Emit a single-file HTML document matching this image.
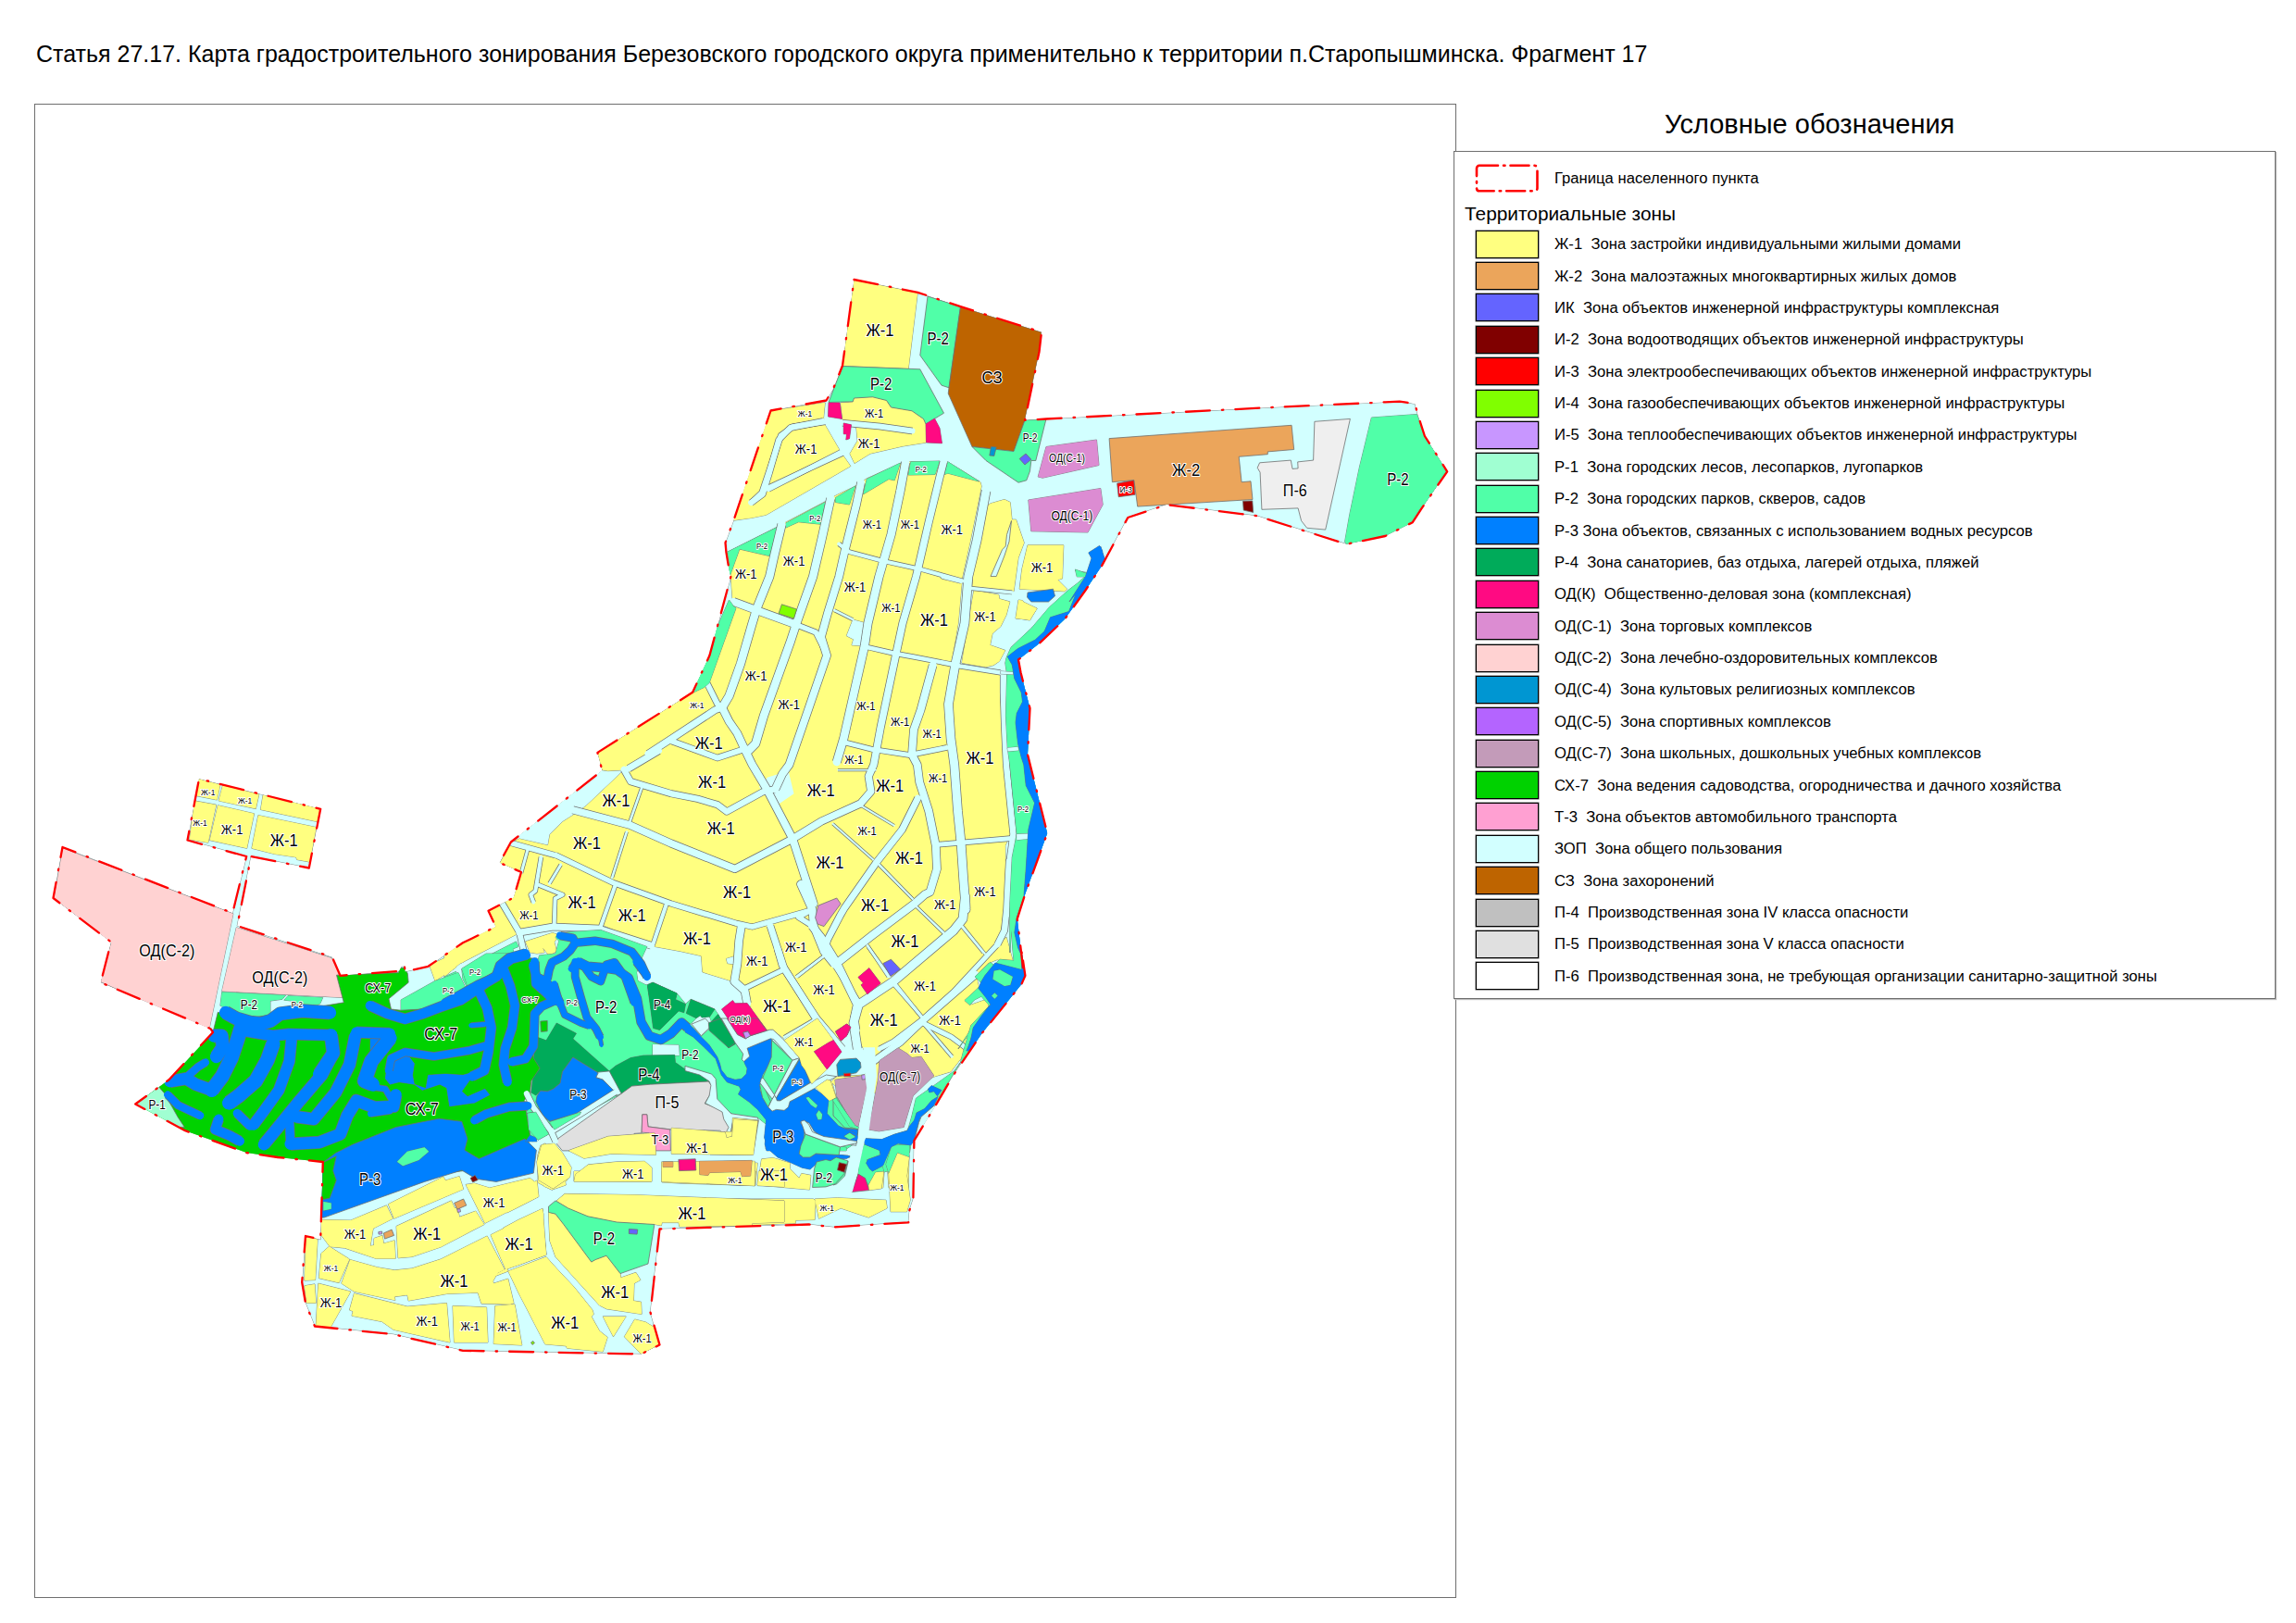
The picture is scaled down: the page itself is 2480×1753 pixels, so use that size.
<!DOCTYPE html>
<html><head><meta charset="utf-8"><title>map</title>
<style>
html,body{margin:0;padding:0;background:#fff;}
body{width:2480px;height:1753px;position:relative;overflow:hidden;font-family:"Liberation Sans",sans-serif;color:#000;}
#title{position:absolute;left:39px;top:44.3px;font-size:25px;white-space:nowrap;line-height:28px;}
#frame{position:absolute;left:37px;top:112px;width:1534px;height:1612px;border:1px solid #6e6e6e;}
#lgbox{position:absolute;left:1570px;top:163px;width:886px;height:914px;border:1px solid #6e6e6e;background:#fff;box-shadow:1px 1px 1px #bbb;}
#lgt{position:absolute;left:1798px;top:118px;font-size:29px;white-space:nowrap;line-height:32px;}
#tz{position:absolute;left:1582px;top:219.5px;font-size:20.85px;white-space:nowrap;line-height:22px;}
.sw{position:absolute;left:1594px;width:66px;height:28px;border:1.5px solid #000;box-shadow:0 0 0 0.5px #555;}
.lt{position:absolute;left:1679px;font-size:16.65px;white-space:nowrap;line-height:20px;}
svg{position:absolute;left:0;top:0;}
svg polygon{stroke:#6e6e6e;stroke-width:0.8;stroke-linejoin:round}
svg polygon.ns{stroke:none}
svg polygon.bd{stroke:#ff0000;stroke-width:2.3;fill:none;stroke-dasharray:26 13 1.5 13;stroke-linecap:round;}
.lb text{font-family:"Liberation Sans",sans-serif;fill:#000;stroke:#fff;stroke-width:2.2px;paint-order:stroke fill;stroke-linejoin:round;text-anchor:middle;}
</style></head><body>
<div id="title">Статья 27.17. Карта градостроительного зонирования Березовского городского округа применительно к территории п.Старопышминска. Фрагмент 17</div>
<div id="frame"></div>
<div id="lgbox"></div>
<div id="lgt">Условные обозначения</div>
<svg width="2480" height="1753" viewBox="0 0 2480 1753">
<rect x="1595" y="178.8" width="65.5" height="27.5" rx="3" fill="none" stroke="#ff0000" stroke-width="2.6" stroke-dasharray="20 6 1.5 6" stroke-linecap="round"/>
<defs><clipPath id="bdc"><polygon points="922.5,302.0 991.2,315.8 1037.5,331.2 1125.0,358.8 1122.5,380.0 1107.0,453.8 1130.0,452.5 1374.0,440.0 1496.2,434.4 1511.8,433.6 1528.4,436.2 1531.0,446.6 1538.9,471.0 1563.2,509.3 1535.4,549.4 1525.8,564.2 1496.2,579.0 1454.4,587.7 1357.7,557.2 1260.1,545.1 1218.3,559.0 1190.0,611.2 1172.5,637.5 1150.0,668.8 1122.5,695.0 1100.0,712.5 1102.5,726.2 1112.5,765.0 1110.0,815.0 1131.2,900.0 1107.5,965.0 1098.8,992.5 1105.0,1045.0 1103.4,1026.4 1107.4,1053.9 1103.4,1063.0 1060.7,1115.9 1030.1,1160.7 1009.8,1195.2 987.4,1231.8 986.4,1294.9 982.4,1307.1 981.3,1320.3 900.0,1325.4 874.0,1322.5 712.5,1327.5 702.5,1417.5 712.5,1452.5 692.5,1462.5 500.0,1458.8 425.0,1441.2 340.0,1432.5 330.0,1407.5 326.2,1385.0 330.0,1335.0 346.2,1338.8 348.8,1255.0 300.0,1250.0 266.2,1245.0 200.0,1221.2 146.2,1192.5 182.5,1166.2 230.0,1115.0 227.5,1111.2 108.8,1061.2 120.0,1017.5 57.5,970.0 67.5,915.0 251.2,986.2 266.2,925.0 202.5,907.5 215.0,841.2 346.2,873.8 333.8,937.5 271.2,925.0 256.2,1000.0 358.8,1033.8 367.5,1053.8 431.2,1048.8 433.8,1043.8 437.0,1043.8 437.5,1049.5 462.5,1043.8 500.0,1018.3 535.6,1001.0 527.5,983.7 554.9,969.4 563.0,942.0 539.7,931.8 551.9,909.5 650.5,832.2 645.4,812.9 748.1,747.8 766.4,708.1 789.4,622.9 787.5,615.0 784.4,596.2 783.5,586.2 792.5,561.9 832.5,443.5 892.5,432.5 900.0,420.0 910.0,395.0"/></clipPath></defs><g clip-path="url(#bdc)">
<polygon points="922.5,302.0 991.2,315.8 1037.5,331.2 1125.0,358.8 1122.5,380.0 1107.0,453.8 1130.0,452.5 1374.0,440.0 1496.2,434.4 1511.8,433.6 1528.4,436.2 1531.0,446.6 1538.9,471.0 1563.2,509.3 1535.4,549.4 1525.8,564.2 1496.2,579.0 1454.4,587.7 1357.7,557.2 1260.1,545.1 1218.3,559.0 1190.0,611.2 1172.5,637.5 1150.0,668.8 1122.5,695.0 1100.0,712.5 1102.5,726.2 1112.5,765.0 1110.0,815.0 1131.2,900.0 1107.5,965.0 1098.8,992.5 1105.0,1045.0 1103.4,1026.4 1107.4,1053.9 1103.4,1063.0 1060.7,1115.9 1030.1,1160.7 1009.8,1195.2 987.4,1231.8 986.4,1294.9 982.4,1307.1 981.3,1320.3 900.0,1325.4 874.0,1322.5 712.5,1327.5 702.5,1417.5 712.5,1452.5 692.5,1462.5 500.0,1458.8 425.0,1441.2 340.0,1432.5 330.0,1407.5 326.2,1385.0 330.0,1335.0 346.2,1338.8 348.8,1255.0 300.0,1250.0 266.2,1245.0 200.0,1221.2 146.2,1192.5 182.5,1166.2 230.0,1115.0 227.5,1111.2 108.8,1061.2 120.0,1017.5 57.5,970.0 67.5,915.0 251.2,986.2 266.2,925.0 202.5,907.5 215.0,841.2 346.2,873.8 333.8,937.5 271.2,925.0 256.2,1000.0 358.8,1033.8 367.5,1053.8 431.2,1048.8 433.8,1043.8 437.0,1043.8 437.5,1049.5 462.5,1043.8 500.0,1018.3 535.6,1001.0 527.5,983.7 554.9,969.4 563.0,942.0 539.7,931.8 551.9,909.5 650.5,832.2 645.4,812.9 748.1,747.8 766.4,708.1 789.4,622.9 787.5,615.0 784.4,596.2 783.5,586.2 792.5,561.9 832.5,443.5 892.5,432.5 900.0,420.0 910.0,395.0" fill="#d2ffff" stroke="#6e6e6e" stroke-width="0.8"/>
<polygon points="922.5,302.5 991.2,316.2 981.2,398.0 910.0,395.0" fill="#ffff80"/>
<polygon points="908.0,435.0 921.2,434.2 922.5,430.0 942.5,428.8 957.5,432.5 962.5,440.0 985.0,443.8 997.5,452.5 1000.0,458.0 1000.5,478.0 975.0,482.0 940.0,490.0 923.0,500.5 918.0,490.0 926.2,476.2 925.0,462.5 910.0,453.0" fill="#ffff80"/>
<polygon points="832.5,443.8 891.2,434.8 889.4,452.8 890.6,458.1 906.2,485.0 910.0,491.0 918.8,503.5 827.5,556.2 811.9,559.4 793.1,562.1 781.2,557.5 825.0,438.8" fill="#ffff80"/>
<polygon points="1070.0,543.8 1085.0,539.5 1091.2,542.5 1093.0,561.2 1097.5,561.2 1106.2,586.2 1100.0,602.5 1095.0,638.8 1050.0,636.2 1052.5,602.5 1057.5,552.5" fill="#ffff80"/>
<polygon points="1110.0,588.8 1148.8,588.8 1147.5,625.0 1142.5,626.2 1152.5,636.2 1150.0,638.8 1101.2,636.2 1103.8,615.0" fill="#ffff80"/>
<polygon points="1102.5,648.8 1120.0,657.0 1112.5,670.0 1097.5,667.5" fill="#ffff80"/>
<polygon points="787.5,615.0 786.2,596.2 839.4,569.4 849.4,563.8 891.2,541.9 903.1,535.0 923.1,525.6 936.2,516.9 973.8,500.0 982.5,498.8 1014.8,498.5 1023.9,499.0 1058.9,520.6 1060.1,525.2 1048.2,583.8 1039.5,622.9 1035.1,673.0 1027.6,716.1 1038.2,718.2 1080.8,725.2 1080.1,748.0 1082.0,785.5 1083.2,825.9 1084.5,826.0 1091.4,901.0 1085.8,913.5 1087.0,963.5 1083.2,988.5 1080.8,1007.2 1079.5,1018.5 1087.1,1012.2 1094.2,1038.6 1076.9,1036.6 1066.8,1040.7 1054.6,1053.9 1057.6,1068.1 1042.3,1080.3 1048.4,1085.4 1068.8,1078.3 1066.8,1089.5 1048.4,1120.0 1040.3,1140.3 1027.1,1157.6 1009.8,1162.7 961.0,1183.0 904.5,1175.0 892.0,1162.5 877.0,1170.0 870.8,1153.8 867.0,1145.0 863.2,1143.8 854.5,1132.5 847.6,1121.9 834.5,1112.5 828.2,1112.5 817.0,1100.0 804.5,1075.0 806.2,1067.5 791.2,1060.0 758.8,1050.0 757.5,1032.5 735.0,1027.5 707.5,1022.5 700.0,1020.0 650.0,998.8 600.0,1002.5 597.5,1000.0 561.2,1007.5 496.2,1041.2 480.0,1055.0 480.0,1031.9 485.6,1026.9 506.9,1013.1 535.0,1000.6 527.5,983.8 543.8,975.0 555.0,968.1 563.1,941.9 540.0,931.9 552.5,909.4 586.2,882.5 650.5,832.2 645.4,812.9 748.1,747.8 748.1,746.8 760.0,721.8 792.5,654.2 791.2,648.0 789.4,623.0" fill="#ffff80"/>
<polygon points="567.5,1016.9 596.9,1007.5 603.8,1010.0 598.8,1017.5 601.2,1027.5 593.1,1031.9 586.2,1023.8 588.1,1028.8 580.0,1030.0 572.5,1028.8" fill="#ffff80"/>
<polygon points="1052.0,637.4 1078.9,642.4 1079.5,646.8 1090.8,649.9 1087.0,664.2 1080.8,676.8 1072.0,684.2 1069.5,696.8 1085.8,702.4 1079.5,714.2 1073.2,718.6 1064.5,720.5 1038.9,716.1 1045.8,673.0" fill="#ffff80"/>
<polygon points="1100.1,648.0 1104.5,648.6 1107.0,653.6 1120.1,657.4 1112.0,669.2 1097.0,668.0" fill="#ffff80"/>
<polygon points="970.0,1246.2 981.9,1247.5 981.2,1282.9 960.0,1282.9 958.8,1265.0" fill="#ffff80"/>
<polygon points="947.5,1267.5 955.0,1265.9 953.8,1282.9 937.5,1282.9 937.5,1280.0 946.2,1275.0" fill="#ffff80"/>
<polygon points="881.4,1171.2 893.2,1166.2 898.2,1167.5 903.2,1185.0 897.0,1188.8" fill="#ffff80"/>
<polygon points="214.4,841.3 237.9,847.4 234.4,864.0 211.8,859.6" fill="#ffff80"/>
<polygon points="240.5,848.3 279.8,857.9 276.3,873.6 236.2,864.9" fill="#ffff80"/>
<polygon points="284.1,858.8 346.0,873.6 342.5,887.5 281.5,874.5" fill="#ffff80"/>
<polygon points="210.0,864.9 233.5,869.2 224.8,910.2 204.8,906.7" fill="#ffff80"/>
<polygon points="235.3,869.8 274.5,878.8 266.7,916.3 226.6,907.6" fill="#ffff80"/>
<polygon points="278.9,880.6 341.7,893.6 334.7,931.1 320.7,928.5 319.9,925.9 296.3,922.4 271.9,916.3" fill="#ffff80"/>
<polygon points="463.8,1042.5 485.0,1032.5 492.5,1045.0 470.0,1059.4" fill="#ffff80"/>
<polygon points="491.2,1030.0 512.5,1030.0 498.8,1040.0" fill="#ffff80"/>
<g style="stroke:none">
<polygon class="ns" points="922.5,302.5 991.2,316.2 981.2,398.0 910.0,395.0" fill="#ffff80"/>
<polygon class="ns" points="908.0,435.0 921.2,434.2 922.5,430.0 942.5,428.8 957.5,432.5 962.5,440.0 985.0,443.8 997.5,452.5 1000.0,458.0 1000.5,478.0 975.0,482.0 940.0,490.0 923.0,500.5 918.0,490.0 926.2,476.2 925.0,462.5 910.0,453.0" fill="#ffff80"/>
<polygon class="ns" points="832.5,443.8 891.2,434.8 889.4,452.8 890.6,458.1 906.2,485.0 910.0,491.0 918.8,503.5 827.5,556.2 811.9,559.4 793.1,562.1 781.2,557.5 825.0,438.8" fill="#ffff80"/>
<polygon class="ns" points="1070.0,543.8 1085.0,539.5 1091.2,542.5 1093.0,561.2 1097.5,561.2 1106.2,586.2 1100.0,602.5 1095.0,638.8 1050.0,636.2 1052.5,602.5 1057.5,552.5" fill="#ffff80"/>
<polygon class="ns" points="1110.0,588.8 1148.8,588.8 1147.5,625.0 1142.5,626.2 1152.5,636.2 1150.0,638.8 1101.2,636.2 1103.8,615.0" fill="#ffff80"/>
<polygon class="ns" points="1102.5,648.8 1120.0,657.0 1112.5,670.0 1097.5,667.5" fill="#ffff80"/>
<polygon class="ns" points="787.5,615.0 786.2,596.2 839.4,569.4 849.4,563.8 891.2,541.9 903.1,535.0 923.1,525.6 936.2,516.9 973.8,500.0 982.5,498.8 1014.8,498.5 1023.9,499.0 1058.9,520.6 1060.1,525.2 1048.2,583.8 1039.5,622.9 1035.1,673.0 1027.6,716.1 1038.2,718.2 1080.8,725.2 1080.1,748.0 1082.0,785.5 1083.2,825.9 1084.5,826.0 1091.4,901.0 1085.8,913.5 1087.0,963.5 1083.2,988.5 1080.8,1007.2 1079.5,1018.5 1087.1,1012.2 1094.2,1038.6 1076.9,1036.6 1066.8,1040.7 1054.6,1053.9 1057.6,1068.1 1042.3,1080.3 1048.4,1085.4 1068.8,1078.3 1066.8,1089.5 1048.4,1120.0 1040.3,1140.3 1027.1,1157.6 1009.8,1162.7 961.0,1183.0 904.5,1175.0 892.0,1162.5 877.0,1170.0 870.8,1153.8 867.0,1145.0 863.2,1143.8 854.5,1132.5 847.6,1121.9 834.5,1112.5 828.2,1112.5 817.0,1100.0 804.5,1075.0 806.2,1067.5 791.2,1060.0 758.8,1050.0 757.5,1032.5 735.0,1027.5 707.5,1022.5 700.0,1020.0 650.0,998.8 600.0,1002.5 597.5,1000.0 561.2,1007.5 496.2,1041.2 480.0,1055.0 480.0,1031.9 485.6,1026.9 506.9,1013.1 535.0,1000.6 527.5,983.8 543.8,975.0 555.0,968.1 563.1,941.9 540.0,931.9 552.5,909.4 586.2,882.5 650.5,832.2 645.4,812.9 748.1,747.8 748.1,746.8 760.0,721.8 792.5,654.2 791.2,648.0 789.4,623.0" fill="#ffff80"/>
<polygon class="ns" points="567.5,1016.9 596.9,1007.5 603.8,1010.0 598.8,1017.5 601.2,1027.5 593.1,1031.9 586.2,1023.8 588.1,1028.8 580.0,1030.0 572.5,1028.8" fill="#ffff80"/>
<polygon class="ns" points="1052.0,637.4 1078.9,642.4 1079.5,646.8 1090.8,649.9 1087.0,664.2 1080.8,676.8 1072.0,684.2 1069.5,696.8 1085.8,702.4 1079.5,714.2 1073.2,718.6 1064.5,720.5 1038.9,716.1 1045.8,673.0" fill="#ffff80"/>
<polygon class="ns" points="1100.1,648.0 1104.5,648.6 1107.0,653.6 1120.1,657.4 1112.0,669.2 1097.0,668.0" fill="#ffff80"/>
<polygon class="ns" points="970.0,1246.2 981.9,1247.5 981.2,1282.9 960.0,1282.9 958.8,1265.0" fill="#ffff80"/>
<polygon class="ns" points="947.5,1267.5 955.0,1265.9 953.8,1282.9 937.5,1282.9 937.5,1280.0 946.2,1275.0" fill="#ffff80"/>
<polygon class="ns" points="881.4,1171.2 893.2,1166.2 898.2,1167.5 903.2,1185.0 897.0,1188.8" fill="#ffff80"/>
<polygon class="ns" points="214.4,841.3 237.9,847.4 234.4,864.0 211.8,859.6" fill="#ffff80"/>
<polygon class="ns" points="240.5,848.3 279.8,857.9 276.3,873.6 236.2,864.9" fill="#ffff80"/>
<polygon class="ns" points="284.1,858.8 346.0,873.6 342.5,887.5 281.5,874.5" fill="#ffff80"/>
<polygon class="ns" points="210.0,864.9 233.5,869.2 224.8,910.2 204.8,906.7" fill="#ffff80"/>
<polygon class="ns" points="235.3,869.8 274.5,878.8 266.7,916.3 226.6,907.6" fill="#ffff80"/>
<polygon class="ns" points="278.9,880.6 341.7,893.6 334.7,931.1 320.7,928.5 319.9,925.9 296.3,922.4 271.9,916.3" fill="#ffff80"/>
<polygon class="ns" points="463.8,1042.5 485.0,1032.5 492.5,1045.0 470.0,1059.4" fill="#ffff80"/>
<polygon class="ns" points="491.2,1030.0 512.5,1030.0 498.8,1040.0" fill="#ffff80"/>
</g>
<polygon points="785.6,596.2 839.4,569.4 831.2,600.6 798.8,593.1 790.0,617.5 787.5,625.0 775.0,625.0 775.0,596.2" fill="#50ffa8"/>
<polygon points="848.8,565.0 891.2,542.5 886.2,566.2 862.5,563.8 848.8,570.0" fill="#50ffa8"/>
<polygon points="902.5,537.5 923.8,525.0 917.5,545.0 902.5,542.5" fill="#50ffa8"/>
<polygon points="936.2,517.5 972.5,500.0 966.2,518.8 960.0,517.5 932.5,533.8" fill="#50ffa8"/>
<polygon points="983.8,498.8 1015.0,498.0 1010.0,512.5 981.2,513.0" fill="#50ffa8"/>
<polygon points="1023.8,498.8 1057.5,520.0 1023.8,511.2 1020.0,512.5" fill="#50ffa8"/>
<g style="stroke:none">
<polygon class="ns" points="785.6,596.2 839.4,569.4 831.2,600.6 798.8,593.1 790.0,617.5 787.5,625.0 775.0,625.0 775.0,596.2" fill="#50ffa8"/>
<polygon class="ns" points="848.8,565.0 891.2,542.5 886.2,566.2 862.5,563.8 848.8,570.0" fill="#50ffa8"/>
<polygon class="ns" points="902.5,537.5 923.8,525.0 917.5,545.0 902.5,542.5" fill="#50ffa8"/>
<polygon class="ns" points="936.2,517.5 972.5,500.0 966.2,518.8 960.0,517.5 932.5,533.8" fill="#50ffa8"/>
<polygon class="ns" points="983.8,498.8 1015.0,498.0 1010.0,512.5 981.2,513.0" fill="#50ffa8"/>
<polygon class="ns" points="1023.8,498.8 1057.5,520.0 1023.8,511.2 1020.0,512.5" fill="#50ffa8"/>
</g>
<polygon points="1206.6,522.1 1224.9,518.6 1226.1,534.3 1208.2,536.7" fill="#ff0000"/>
<polygon points="1342.5,541.2 1352.8,540.9 1353.7,553.4 1343.2,551.1" fill="#800000"/>
<polygon points="1070.0,622.5 1082.5,593.8 1086.2,590.0 1087.5,577.5 1092.5,562.5 1090.0,585.0 1085.0,600.0 1076.2,622.5" fill="#d2ffff"/>
<polygon points="1110.0,640.0 1137.5,636.2 1139.5,643.8 1132.5,650.0 1113.8,650.0 1109.5,645.0" fill="#0080ff"/>
<polygon points="921.2,669.2 935.0,673.0 937.5,698.0 920.0,696.8 921.9,690.5 914.4,686.8" fill="#d2ffff"/>
<polygon points="650.5,832.2 656.6,833.2 672.9,832.2 633.2,869.8 622.0,877.9 607.8,887.1 593.5,901.3 591.5,912.5 561.0,905.4 551.9,909.5 530.5,903.4 642.3,813.9" fill="#d2ffff"/>
<g style="stroke:none">
<polygon class="ns" points="921.2,669.2 935.0,673.0 937.5,698.0 920.0,696.8 921.9,690.5 914.4,686.8" fill="#d2ffff"/>
<polygon class="ns" points="650.5,832.2 656.6,833.2 672.9,832.2 633.2,869.8 622.0,877.9 607.8,887.1 593.5,901.3 591.5,912.5 561.0,905.4 551.9,909.5 530.5,903.4 642.3,813.9" fill="#d2ffff"/>
</g>
<polygon class="ns" points="820.0,849.8 826.2,843.5 828.8,839.8 848.8,833.5 851.2,831.0 857.5,857.2 841.2,868.5 825.0,857.2" fill="#d2ffff"/>
<polygon points="924.8,1097.5 917.0,1107.5 918.9,1109.4 915.1,1118.1 908.9,1123.8 908.2,1135.6 893.2,1154.4 877.0,1170.0 881.4,1171.2 893.2,1166.2 898.2,1167.5 903.2,1162.5 933.2,1160.6 949.5,1145.0 937.0,1142.5 928.2,1125.0 923.9,1112.5" fill="#d2ffff"/>
<polygon points="784.5,1035.6 796.4,1031.9 796.4,1041.9 785.8,1040.6" fill="#d2ffff"/>
<g style="stroke:none">
<polygon class="ns" points="924.8,1097.5 917.0,1107.5 918.9,1109.4 915.1,1118.1 908.9,1123.8 908.2,1135.6 893.2,1154.4 877.0,1170.0 881.4,1171.2 893.2,1166.2 898.2,1167.5 903.2,1162.5 933.2,1160.6 949.5,1145.0 937.0,1142.5 928.2,1125.0 923.9,1112.5" fill="#d2ffff"/>
<polygon class="ns" points="784.5,1035.6 796.4,1031.9 796.4,1041.9 785.8,1040.6" fill="#d2ffff"/>
</g>
<g fill="none" stroke="#6e6e6e" stroke-linejoin="round">
<polyline points="910.0,456.8 950.0,460.5 985.5,465.5" stroke-width="7.4"/>
<polyline points="889.2,455.0 853.8,462.0 841.2,475.0 831.2,510.0 823.8,533.8 811.2,543.0" stroke-width="7.4"/>
<polyline points="829.5,527.0 870.0,508.0 910.0,489.5" stroke-width="6.4"/>
<polyline points="891.2,455.6 856.2,461.0 843.5,470.4 823.1,531.9 811.9,542.8" stroke-width="7.0"/>
<polyline points="830.0,528.5 908.1,488.5" stroke-width="6.4"/>
<polyline points="844.4,566.5 836.2,600.6 831.2,622.9 817.5,656.8 811.9,675.5 800.0,716.8 787.5,751.8 780.0,764.2" stroke-width="9.9"/>
<polyline points="897.2,538.5 887.5,582.5 878.1,622.9 861.2,670.5 853.8,693.0 825.0,773.0 816.2,803.0 808.8,810.5 803.8,809.2" stroke-width="9.9"/>
<polyline points="930.0,521.2 925.0,545.0 912.5,595.0 906.2,622.9 893.8,663.0 886.9,688.0 893.1,708.0 873.8,764.2 852.5,825.9 845.0,836.0 837.5,852.2" stroke-width="9.4"/>
<polyline points="978.1,499.4 972.5,530.0 962.5,577.5 949.4,623.0 937.5,673.0 933.8,698.0 922.5,748.0 911.2,798.0 903.8,823.0" stroke-width="9.9"/>
<polyline points="1019.2,498.8 1014.8,516.2 1003.2,563.8 992.0,612.5 989.5,622.9 975.0,673.0 967.5,708.0 951.2,785.5 943.8,825.9 938.2,838.5 940.8,854.8 929.5,867.9 887.0,887.2 856.2,906.0 793.8,938.5 725.0,911.0 680.0,891.0 618.8,874.8" stroke-width="8.9"/>
<polyline points="1065.1,530.0 1055.1,583.8 1045.8,622.9 1042.0,673.0 1032.0,716.8 1024.5,760.5 1027.0,798.0 1030.8,825.9 1034.5,876.0 1038.2,912.2 1040.8,951.0 1043.2,982.2 1042.5,967.5 1040.0,992.5 1030.0,1005.0 965.0,1060.0 927.5,1085.0 921.9,1105.0 926.2,1132.9" stroke-width="10.4"/>
<polyline points="906.2,587.5 917.5,596.2 955.0,606.2 995.0,615.0 1040.0,627.5 1018.2,623.0 1038.2,628.0" stroke-width="5.4"/>
<polyline points="1049.5,635.5 1093.2,639.9" stroke-width="4.9"/>
<polyline points="901.2,659.2 921.2,669.2" stroke-width="3.9"/>
<polyline points="937.5,699.2 965.0,705.5 987.0,709.5 1024.5,716.8 1037.0,719.5 1080.8,726.5 1093.9,727.4" stroke-width="5.9"/>
<polyline points="792.5,649.9 817.5,659.2 858.8,674.2" stroke-width="9.4"/>
<polyline points="858.8,674.2 881.2,683.0 891.2,703.0" stroke-width="6.9"/>
<polyline points="912.5,801.8 941.2,809.2 982.5,815.5 1022.5,807.5" stroke-width="6.4"/>
<polyline points="905.0,831.8 946.2,831.8" stroke-width="2.9"/>
<polyline points="1007.6,718.6 994.5,766.8 987.0,788.0 985.0,815.0 990.8,826.0 993.2,844.8 1003.2,876.0 1010.8,913.5 1012.0,938.5 1004.5,963.5 998.8,966.2 987.5,976.2 942.5,1010.0 907.5,1037.5 901.2,1041.2" stroke-width="9.4"/>
<polyline points="780.0,764.2 787.5,779.2 796.2,791.8 803.8,808.0 812.5,825.9 827.5,851.0 856.2,906.0 878.8,976.0 865.0,955.0 877.5,982.5 878.8,1000.0 890.0,1027.5 901.2,1041.2" stroke-width="9.4"/>
<polyline points="901.2,1041.2 926.2,1081.2 927.5,1085.0" stroke-width="6.9"/>
<polyline points="780.0,764.2 775.0,760.5 762.5,735.5 756.9,729.2" stroke-width="7.4"/>
<polyline points="780.0,764.2 772.5,766.8 725.0,798.0 700.0,814.2" stroke-width="8.4"/>
<polyline points="725.6,800.5 775.0,818.6 803.8,809.2" stroke-width="7.4"/>
<polyline points="673.8,831.0 681.2,844.1 725.0,857.2 753.8,862.9 775.0,869.1 785.0,876.6 823.8,855.4 837.5,852.2" stroke-width="7.9"/>
<polyline points="600.0,923.5 662.5,953.5 725.0,976.0 795.0,997.2 812.5,1001.0 875.0,983.5 862.5,990.6 877.5,1000.0" stroke-width="6.9"/>
<polyline points="1083.9,723.0 1083.9,748.0 1085.1,785.5 1087.0,825.9 1088.2,838.5 1094.5,901.0 1089.5,938.5 1087.0,988.5 1090.0,930.0 1088.8,967.5 1085.0,1005.0 1077.5,1020.0" stroke-width="7.9"/>
<polyline points="1077.5,1020.0 1045.0,1055.0 1030.0,1071.2 996.2,1101.2 965.0,1125.0 950.0,1132.9" stroke-width="6.4"/>
<polyline points="1013.2,912.2 1087.0,906.0 1109.5,903.8" stroke-width="6.4"/>
<polyline points="1080.8,726.5 1093.9,727.4" stroke-width="3.4"/>
<polyline points="929.5,869.8 965.8,891.6" stroke-width="3.4"/>
<polyline points="899.5,889.8 943.2,928.5" stroke-width="3.4"/>
<polyline points="949.5,933.5 985.8,971.0" stroke-width="3.4"/>
<polyline points="989.5,979.1 1019.5,1007.2" stroke-width="3.4"/>
<polyline points="1038.9,1001.0 1062.0,1028.9" stroke-width="3.4"/>
<polyline points="950.0,935.0 985.6,970.6" stroke-width="3.4"/>
<polyline points="990.0,979.4 1020.0,1008.8" stroke-width="3.4"/>
<polyline points="1040.0,1000.6 1063.8,1030.0" stroke-width="3.4"/>
<polyline points="937.5,1022.5 961.2,1055.0" stroke-width="3.9"/>
<polyline points="966.2,1064.4 995.0,1097.5" stroke-width="4.4"/>
<polyline points="861.2,1055.0 890.0,1032.5" stroke-width="3.9"/>
<polyline points="847.5,1122.5 882.5,1100.0" stroke-width="3.9"/>
<polyline points="996.9,1105.0 1027.5,1120.0 1045.0,1132.9" stroke-width="6.4"/>
<polyline points="693.1,851.0 680.0,888.5" stroke-width="3.9"/>
<polyline points="676.9,898.5 661.2,947.9" stroke-width="3.9"/>
<polyline points="664.4,956.6 648.8,1001.0" stroke-width="5.4"/>
<polyline points="720.0,976.0 705.0,1021.0" stroke-width="5.4"/>
<polyline points="840.0,1025.0 845.0,1042.5 881.2,1100.0 910.0,1132.9" stroke-width="8.4"/>
<polyline points="551.9,910.5 599.6,923.7" stroke-width="6.9"/>
<polyline points="711.5,810.8 679.0,830.1" stroke-width="8.4"/>
<polyline points="570.2,916.6 563.0,943.0" stroke-width="4.4"/>
<polyline points="584.4,925.7 578.3,962.3 573.2,966.4 576.3,974.5" stroke-width="5.4"/>
<polyline points="605.7,933.9 593.5,954.2" stroke-width="4.4"/>
<polyline points="580.3,955.2 607.8,966.4 599.6,970.5 598.6,1001.0" stroke-width="5.4"/>
<polyline points="541.7,974.5 561.0,1007.1 567.1,1033.5" stroke-width="7.4"/>
<polyline points="561.0,1007.1 597.6,1001.0 646.4,1003.0 703.4,1021.3" stroke-width="8.4"/>
<polyline points="991.4,862.2 974.5,896.0 947.0,931.0 912.0,981.0 907.5,988.8 893.8,1015.0 890.0,1027.5" stroke-width="8.4"/>
<polyline points="877.0,1000.0 887.0,1012.5 904.5,1041.2 925.8,1085.0 922.6,1100.0 924.5,1112.5" stroke-width="9.4"/>
<polyline points="1054.0,1052.5 999.5,1100.0 972.0,1126.2 942.0,1147.5" stroke-width="8.4"/>
<polyline points="967.0,1062.5 995.8,1098.8" stroke-width="4.4"/>
<polyline points="998.2,1106.2 1028.2,1141.2" stroke-width="4.4"/>
<polyline points="937.0,1021.2 959.5,1055.0" stroke-width="3.9"/>
<polyline points="832.0,1000.0 847.0,1046.2 882.0,1100.0 899.5,1120.6" stroke-width="8.4"/>
<polyline points="804.5,1067.5 847.0,1046.9" stroke-width="6.4"/>
<polyline points="860.1,1055.0 890.8,1031.9" stroke-width="3.9"/>
<polyline points="847.0,1120.0 881.4,1100.0" stroke-width="3.9"/>
<polyline points="800.8,1000.0 798.2,1016.2 796.4,1041.2 793.2,1060.0 804.5,1070.0 807.0,1083.5" stroke-width="9.4"/>
</g><g fill="none" stroke-linejoin="round" stroke-linecap="round">
<polyline points="910.0,456.8 950.0,460.5 985.5,465.5" stroke="#d2ffff" stroke-width="6.0"/>
<polyline points="889.2,455.0 853.8,462.0 841.2,475.0 831.2,510.0 823.8,533.8 811.2,543.0" stroke="#d2ffff" stroke-width="6.0"/>
<polyline points="829.5,527.0 870.0,508.0 910.0,489.5" stroke="#d2ffff" stroke-width="5.0"/>
<polyline points="891.2,455.6 856.2,461.0 843.5,470.4 823.1,531.9 811.9,542.8" stroke="#d2ffff" stroke-width="5.6"/>
<polyline points="830.0,528.5 908.1,488.5" stroke="#d2ffff" stroke-width="5.0"/>
<polyline points="844.4,566.5 836.2,600.6 831.2,622.9 817.5,656.8 811.9,675.5 800.0,716.8 787.5,751.8 780.0,764.2" stroke="#d2ffff" stroke-width="8.5"/>
<polyline points="897.2,538.5 887.5,582.5 878.1,622.9 861.2,670.5 853.8,693.0 825.0,773.0 816.2,803.0 808.8,810.5 803.8,809.2" stroke="#d2ffff" stroke-width="8.5"/>
<polyline points="930.0,521.2 925.0,545.0 912.5,595.0 906.2,622.9 893.8,663.0 886.9,688.0 893.1,708.0 873.8,764.2 852.5,825.9 845.0,836.0 837.5,852.2" stroke="#d2ffff" stroke-width="8.0"/>
<polyline points="978.1,499.4 972.5,530.0 962.5,577.5 949.4,623.0 937.5,673.0 933.8,698.0 922.5,748.0 911.2,798.0 903.8,823.0" stroke="#d2ffff" stroke-width="8.5"/>
<polyline points="1019.2,498.8 1014.8,516.2 1003.2,563.8 992.0,612.5 989.5,622.9 975.0,673.0 967.5,708.0 951.2,785.5 943.8,825.9 938.2,838.5 940.8,854.8 929.5,867.9 887.0,887.2 856.2,906.0 793.8,938.5 725.0,911.0 680.0,891.0 618.8,874.8" stroke="#d2ffff" stroke-width="7.5"/>
<polyline points="1065.1,530.0 1055.1,583.8 1045.8,622.9 1042.0,673.0 1032.0,716.8 1024.5,760.5 1027.0,798.0 1030.8,825.9 1034.5,876.0 1038.2,912.2 1040.8,951.0 1043.2,982.2 1042.5,967.5 1040.0,992.5 1030.0,1005.0 965.0,1060.0 927.5,1085.0 921.9,1105.0 926.2,1132.9" stroke="#d2ffff" stroke-width="9.0"/>
<polyline points="906.2,587.5 917.5,596.2 955.0,606.2 995.0,615.0 1040.0,627.5 1018.2,623.0 1038.2,628.0" stroke="#d2ffff" stroke-width="4.0"/>
<polyline points="1049.5,635.5 1093.2,639.9" stroke="#d2ffff" stroke-width="3.5"/>
<polyline points="901.2,659.2 921.2,669.2" stroke="#d2ffff" stroke-width="2.5"/>
<polyline points="937.5,699.2 965.0,705.5 987.0,709.5 1024.5,716.8 1037.0,719.5 1080.8,726.5 1093.9,727.4" stroke="#d2ffff" stroke-width="4.5"/>
<polyline points="792.5,649.9 817.5,659.2 858.8,674.2" stroke="#d2ffff" stroke-width="8.0"/>
<polyline points="858.8,674.2 881.2,683.0 891.2,703.0" stroke="#d2ffff" stroke-width="5.5"/>
<polyline points="912.5,801.8 941.2,809.2 982.5,815.5 1022.5,807.5" stroke="#d2ffff" stroke-width="5.0"/>
<polyline points="905.0,831.8 946.2,831.8" stroke="#d2ffff" stroke-width="1.5"/>
<polyline points="1007.6,718.6 994.5,766.8 987.0,788.0 985.0,815.0 990.8,826.0 993.2,844.8 1003.2,876.0 1010.8,913.5 1012.0,938.5 1004.5,963.5 998.8,966.2 987.5,976.2 942.5,1010.0 907.5,1037.5 901.2,1041.2" stroke="#d2ffff" stroke-width="8.0"/>
<polyline points="780.0,764.2 787.5,779.2 796.2,791.8 803.8,808.0 812.5,825.9 827.5,851.0 856.2,906.0 878.8,976.0 865.0,955.0 877.5,982.5 878.8,1000.0 890.0,1027.5 901.2,1041.2" stroke="#d2ffff" stroke-width="8.0"/>
<polyline points="901.2,1041.2 926.2,1081.2 927.5,1085.0" stroke="#d2ffff" stroke-width="5.5"/>
<polyline points="780.0,764.2 775.0,760.5 762.5,735.5 756.9,729.2" stroke="#d2ffff" stroke-width="6.0"/>
<polyline points="780.0,764.2 772.5,766.8 725.0,798.0 700.0,814.2" stroke="#d2ffff" stroke-width="7.0"/>
<polyline points="725.6,800.5 775.0,818.6 803.8,809.2" stroke="#d2ffff" stroke-width="6.0"/>
<polyline points="673.8,831.0 681.2,844.1 725.0,857.2 753.8,862.9 775.0,869.1 785.0,876.6 823.8,855.4 837.5,852.2" stroke="#d2ffff" stroke-width="6.5"/>
<polyline points="600.0,923.5 662.5,953.5 725.0,976.0 795.0,997.2 812.5,1001.0 875.0,983.5 862.5,990.6 877.5,1000.0" stroke="#d2ffff" stroke-width="5.5"/>
<polyline points="1083.9,723.0 1083.9,748.0 1085.1,785.5 1087.0,825.9 1088.2,838.5 1094.5,901.0 1089.5,938.5 1087.0,988.5 1090.0,930.0 1088.8,967.5 1085.0,1005.0 1077.5,1020.0" stroke="#d2ffff" stroke-width="6.5"/>
<polyline points="1077.5,1020.0 1045.0,1055.0 1030.0,1071.2 996.2,1101.2 965.0,1125.0 950.0,1132.9" stroke="#d2ffff" stroke-width="5.0"/>
<polyline points="1013.2,912.2 1087.0,906.0 1109.5,903.8" stroke="#d2ffff" stroke-width="5.0"/>
<polyline points="1080.8,726.5 1093.9,727.4" stroke="#d2ffff" stroke-width="2.0"/>
<polyline points="929.5,869.8 965.8,891.6" stroke="#d2ffff" stroke-width="2.0"/>
<polyline points="899.5,889.8 943.2,928.5" stroke="#d2ffff" stroke-width="2.0"/>
<polyline points="949.5,933.5 985.8,971.0" stroke="#d2ffff" stroke-width="2.0"/>
<polyline points="989.5,979.1 1019.5,1007.2" stroke="#d2ffff" stroke-width="2.0"/>
<polyline points="1038.9,1001.0 1062.0,1028.9" stroke="#d2ffff" stroke-width="2.0"/>
<polyline points="950.0,935.0 985.6,970.6" stroke="#d2ffff" stroke-width="2.0"/>
<polyline points="990.0,979.4 1020.0,1008.8" stroke="#d2ffff" stroke-width="2.0"/>
<polyline points="1040.0,1000.6 1063.8,1030.0" stroke="#d2ffff" stroke-width="2.0"/>
<polyline points="937.5,1022.5 961.2,1055.0" stroke="#d2ffff" stroke-width="2.5"/>
<polyline points="966.2,1064.4 995.0,1097.5" stroke="#d2ffff" stroke-width="3.0"/>
<polyline points="861.2,1055.0 890.0,1032.5" stroke="#d2ffff" stroke-width="2.5"/>
<polyline points="847.5,1122.5 882.5,1100.0" stroke="#d2ffff" stroke-width="2.5"/>
<polyline points="996.9,1105.0 1027.5,1120.0 1045.0,1132.9" stroke="#d2ffff" stroke-width="5.0"/>
<polyline points="693.1,851.0 680.0,888.5" stroke="#d2ffff" stroke-width="2.5"/>
<polyline points="676.9,898.5 661.2,947.9" stroke="#d2ffff" stroke-width="2.5"/>
<polyline points="664.4,956.6 648.8,1001.0" stroke="#d2ffff" stroke-width="4.0"/>
<polyline points="720.0,976.0 705.0,1021.0" stroke="#d2ffff" stroke-width="4.0"/>
<polyline points="840.0,1025.0 845.0,1042.5 881.2,1100.0 910.0,1132.9" stroke="#d2ffff" stroke-width="7.0"/>
<polyline points="551.9,910.5 599.6,923.7" stroke="#d2ffff" stroke-width="5.5"/>
<polyline points="711.5,810.8 679.0,830.1" stroke="#d2ffff" stroke-width="7.0"/>
<polyline points="570.2,916.6 563.0,943.0" stroke="#d2ffff" stroke-width="3.0"/>
<polyline points="584.4,925.7 578.3,962.3 573.2,966.4 576.3,974.5" stroke="#d2ffff" stroke-width="4.0"/>
<polyline points="605.7,933.9 593.5,954.2" stroke="#d2ffff" stroke-width="3.0"/>
<polyline points="580.3,955.2 607.8,966.4 599.6,970.5 598.6,1001.0" stroke="#d2ffff" stroke-width="4.0"/>
<polyline points="541.7,974.5 561.0,1007.1 567.1,1033.5" stroke="#d2ffff" stroke-width="6.0"/>
<polyline points="561.0,1007.1 597.6,1001.0 646.4,1003.0 703.4,1021.3" stroke="#d2ffff" stroke-width="7.0"/>
<polyline points="991.4,862.2 974.5,896.0 947.0,931.0 912.0,981.0 907.5,988.8 893.8,1015.0 890.0,1027.5" stroke="#d2ffff" stroke-width="7.0"/>
<polyline points="877.0,1000.0 887.0,1012.5 904.5,1041.2 925.8,1085.0 922.6,1100.0 924.5,1112.5" stroke="#d2ffff" stroke-width="8.0"/>
<polyline points="1054.0,1052.5 999.5,1100.0 972.0,1126.2 942.0,1147.5" stroke="#d2ffff" stroke-width="7.0"/>
<polyline points="967.0,1062.5 995.8,1098.8" stroke="#d2ffff" stroke-width="3.0"/>
<polyline points="998.2,1106.2 1028.2,1141.2" stroke="#d2ffff" stroke-width="3.0"/>
<polyline points="937.0,1021.2 959.5,1055.0" stroke="#d2ffff" stroke-width="2.5"/>
<polyline points="832.0,1000.0 847.0,1046.2 882.0,1100.0 899.5,1120.6" stroke="#d2ffff" stroke-width="7.0"/>
<polyline points="804.5,1067.5 847.0,1046.9" stroke="#d2ffff" stroke-width="5.0"/>
<polyline points="860.1,1055.0 890.8,1031.9" stroke="#d2ffff" stroke-width="2.5"/>
<polyline points="847.0,1120.0 881.4,1100.0" stroke="#d2ffff" stroke-width="2.5"/>
<polyline points="800.8,1000.0 798.2,1016.2 796.4,1041.2 793.2,1060.0 804.5,1070.0 807.0,1083.5" stroke="#d2ffff" stroke-width="8.0"/>
</g>
<polygon points="1002.0,320.0 1037.5,331.2 1025.0,418.8 1017.0,416.2 993.8,383.8" fill="#50ffa8"/>
<polygon points="1037.5,331.2 1125.0,358.8 1122.5,380.0 1107.0,453.8 1095.0,487.5 1050.0,482.5 1024.2,425.0 1025.0,418.8" fill="#be6400"/>
<polygon points="910.0,395.5 993.8,398.8 1019.5,446.2 1000.0,458.0 997.5,452.5 985.0,443.8 962.5,440.0 957.5,432.5 942.5,428.8 922.5,430.0 921.2,433.8 895.0,434.5" fill="#50ffa8"/>
<polygon points="895.0,435.0 907.0,435.0 909.5,452.5 894.5,450.0" fill="#ff0a82"/>
<polygon points="911.2,457.0 919.5,458.8 917.5,473.8 913.8,475.0 914.5,468.8 911.2,468.8" fill="#ff0a82"/>
<polygon points="1000.0,458.0 1009.5,452.0 1015.0,462.5 1017.5,478.8 1000.5,478.0" fill="#ff0a82"/>
<g style="stroke:none">
<polygon class="ns" points="895.0,435.0 907.0,435.0 909.5,452.5 894.5,450.0" fill="#ff0a82"/>
<polygon class="ns" points="911.2,457.0 919.5,458.8 917.5,473.8 913.8,475.0 914.5,468.8 911.2,468.8" fill="#ff0a82"/>
<polygon class="ns" points="1000.0,458.0 1009.5,452.0 1015.0,462.5 1017.5,478.8 1000.5,478.0" fill="#ff0a82"/>
</g>
<polygon points="1050.0,482.5 1095.0,487.5 1107.0,453.8 1130.0,452.5 1118.8,497.5 1113.8,497.5 1112.5,508.8 1108.8,518.8 1100.0,521.2 1065.0,497.5" fill="#50ffa8"/>
<polygon points="1130.0,482.5 1184.5,475.0 1187.0,502.5 1126.2,516.2 1121.2,515.0" fill="#dc8cd2"/>
<polygon points="1110.8,540.0 1188.8,527.5 1191.2,545.0 1175.0,575.0 1113.8,573.8" fill="#dc8cd2"/>
<g style="stroke:none">
<polygon class="ns" points="1130.0,482.5 1184.5,475.0 1187.0,502.5 1126.2,516.2 1121.2,515.0" fill="#dc8cd2"/>
<polygon class="ns" points="1110.8,540.0 1188.8,527.5 1191.2,545.0 1175.0,575.0 1113.8,573.8" fill="#dc8cd2"/>
</g>
<polygon points="1198.1,473.6 1395.1,459.3 1397.7,485.5 1369.3,487.9 1369.3,490.7 1338.2,493.3 1341.1,520.7 1351.0,519.8 1353.0,539.5 1228.7,547.1 1226.1,527.6 1224.9,518.6 1201.4,520.7" fill="#eba55b"/>
<polygon points="1360.6,499.8 1394.3,497.1 1396.0,506.4 1402.1,505.9 1401.7,498.9 1418.6,497.1 1419.9,455.3 1458.4,452.4 1431.7,572.1 1411.7,570.3 1405.6,562.5 1402.1,548.9 1362.9,550.3 1361.1,510.2 1358.2,505.3" fill="#efefef"/>
<polygon points="1481.4,451.0 1530.5,447.5 1538.9,471.0 1563.2,509.3 1535.4,549.4 1525.8,564.2 1496.2,579.0 1454.4,587.7 1452.6,585.1 1457.8,555.5 1468.3,505.0" fill="#50ffa8"/>
<polygon points="480.0,1055.0 492.5,1049.4 501.2,1071.2 480.0,1080.0" fill="#50ffa8"/>
<polygon points="498.8,1046.9 557.5,1016.9 560.0,1022.5 553.8,1025.0 555.6,1030.0 567.5,1028.1 566.2,1031.2 557.5,1036.2 542.5,1040.0 532.5,1053.8 517.5,1060.0 505.0,1067.5 500.0,1057.5" fill="#50ffa8"/>
<polygon points="603.1,1007.5 648.8,1004.4 698.8,1022.5 692.5,1036.2 685.0,1057.5 700.0,1065.0 692.5,1082.9 580.0,1082.9 580.0,1042.5 582.5,1031.9 600.0,1030.0 603.8,1016.2 600.0,1012.5" fill="#50ffa8"/>
<polygon points="581.2,1040.0 690.0,1040.0 687.5,1050.0 690.0,1067.5 705.0,1061.2 731.2,1073.1 740.6,1084.4 746.2,1079.4 771.9,1090.0 775.6,1095.6 794.4,1127.5 802.5,1147.5 807.5,1160.0 815.0,1201.2 790.0,1202.5 782.5,1200.0 761.2,1191.9 767.5,1181.2 768.8,1172.5 765.0,1168.1 682.5,1173.1 671.2,1181.2 598.8,1220.0 592.5,1225.0 581.2,1231.2 570.0,1220.0 568.8,1202.5 573.8,1180.0 576.2,1146.2 581.2,1120.6 582.5,1087.5" fill="#50ffa8"/>
<polygon points="1161.2,616.2 1175.0,620.0 1163.9,629.9 1153.2,638.0 1133.2,656.1 1114.5,678.0 1092.0,699.2 1087.0,710.5 1085.8,716.1 1087.6,728.6 1086.4,773.0 1088.2,807.4 1090.8,825.9 1098.2,901.0 1093.2,926.0 1090.8,976.0 1090.8,1028.9 1092.5,1005.0 1093.8,1025.0 1095.0,1037.5 1080.0,1036.2 1073.8,1042.5 1069.4,1039.4 1053.1,1055.0 1058.1,1059.4 1060.0,1062.5 1056.2,1067.5 1041.9,1080.6 1047.5,1085.6 1052.5,1080.0 1060.0,1076.2 1068.8,1086.2 1052.5,1105.0 1045.0,1117.5 1035.0,1132.9 1067.5,1087.5 1048.8,1107.5 1040.0,1137.5 1037.5,1147.5 1075.0,1147.5 1140.0,1055.0 1140.0,930.0 1199.5,825.9 1199.5,623.0" fill="#50ffa8"/>
<polygon points="792.5,654.9 795.0,656.8 766.2,737.4 760.6,742.4 748.8,748.0 737.5,748.0 760.0,710.5 787.5,648.0" fill="#50ffa8"/>
<polygon points="740.0,1100.0 779.2,1100.0 794.0,1126.1 802.7,1138.3 801.4,1144.4 803.6,1146.6 832.3,1121.8 855.9,1145.3 863.7,1142.7 875.0,1169.7 879.4,1175.8 895.1,1187.1 899.4,1188.0 923.8,1215.9 927.3,1217.2 926.8,1228.0 924.7,1234.1 914.2,1241.0 827.1,1241.0 829.7,1215.9 818.4,1207.1 789.7,1202.8 774.8,1187.1 773.1,1165.3 768.7,1160.1 740.0,1151.4" fill="#50ffa8"/>
<g style="stroke:none">
<polygon class="ns" points="1481.4,451.0 1530.5,447.5 1538.9,471.0 1563.2,509.3 1535.4,549.4 1525.8,564.2 1496.2,579.0 1454.4,587.7 1452.6,585.1 1457.8,555.5 1468.3,505.0" fill="#50ffa8"/>
<polygon class="ns" points="480.0,1055.0 492.5,1049.4 501.2,1071.2 480.0,1080.0" fill="#50ffa8"/>
<polygon class="ns" points="498.8,1046.9 557.5,1016.9 560.0,1022.5 553.8,1025.0 555.6,1030.0 567.5,1028.1 566.2,1031.2 557.5,1036.2 542.5,1040.0 532.5,1053.8 517.5,1060.0 505.0,1067.5 500.0,1057.5" fill="#50ffa8"/>
<polygon class="ns" points="603.1,1007.5 648.8,1004.4 698.8,1022.5 692.5,1036.2 685.0,1057.5 700.0,1065.0 692.5,1082.9 580.0,1082.9 580.0,1042.5 582.5,1031.9 600.0,1030.0 603.8,1016.2 600.0,1012.5" fill="#50ffa8"/>
<polygon class="ns" points="581.2,1040.0 690.0,1040.0 687.5,1050.0 690.0,1067.5 705.0,1061.2 731.2,1073.1 740.6,1084.4 746.2,1079.4 771.9,1090.0 775.6,1095.6 794.4,1127.5 802.5,1147.5 807.5,1160.0 815.0,1201.2 790.0,1202.5 782.5,1200.0 761.2,1191.9 767.5,1181.2 768.8,1172.5 765.0,1168.1 682.5,1173.1 671.2,1181.2 598.8,1220.0 592.5,1225.0 581.2,1231.2 570.0,1220.0 568.8,1202.5 573.8,1180.0 576.2,1146.2 581.2,1120.6 582.5,1087.5" fill="#50ffa8"/>
<polygon class="ns" points="1161.2,616.2 1175.0,620.0 1163.9,629.9 1153.2,638.0 1133.2,656.1 1114.5,678.0 1092.0,699.2 1087.0,710.5 1085.8,716.1 1087.6,728.6 1086.4,773.0 1088.2,807.4 1090.8,825.9 1098.2,901.0 1093.2,926.0 1090.8,976.0 1090.8,1028.9 1092.5,1005.0 1093.8,1025.0 1095.0,1037.5 1080.0,1036.2 1073.8,1042.5 1069.4,1039.4 1053.1,1055.0 1058.1,1059.4 1060.0,1062.5 1056.2,1067.5 1041.9,1080.6 1047.5,1085.6 1052.5,1080.0 1060.0,1076.2 1068.8,1086.2 1052.5,1105.0 1045.0,1117.5 1035.0,1132.9 1067.5,1087.5 1048.8,1107.5 1040.0,1137.5 1037.5,1147.5 1075.0,1147.5 1140.0,1055.0 1140.0,930.0 1199.5,825.9 1199.5,623.0" fill="#50ffa8"/>
<polygon class="ns" points="792.5,654.9 795.0,656.8 766.2,737.4 760.6,742.4 748.8,748.0 737.5,748.0 760.0,710.5 787.5,648.0" fill="#50ffa8"/>
<polygon class="ns" points="740.0,1100.0 779.2,1100.0 794.0,1126.1 802.7,1138.3 801.4,1144.4 803.6,1146.6 832.3,1121.8 855.9,1145.3 863.7,1142.7 875.0,1169.7 879.4,1175.8 895.1,1187.1 899.4,1188.0 923.8,1215.9 927.3,1217.2 926.8,1228.0 924.7,1234.1 914.2,1241.0 827.1,1241.0 829.7,1215.9 818.4,1207.1 789.7,1202.8 774.8,1187.1 773.1,1165.3 768.7,1160.1 740.0,1151.4" fill="#50ffa8"/>
</g>
<polygon points="67.9,916.3 251.9,986.9 225.7,1113.0 108.9,1060.2 120.2,1018.3 58.3,970.4" fill="#ffd2d2"/>
<polygon points="255.3,1001.8 358.2,1034.9 367.8,1054.9 372.2,1077.6 239.7,1070.6" fill="#ffd2d2"/>
<g style="stroke:none">
<polygon class="ns" points="67.9,916.3 251.9,986.9 225.7,1113.0 108.9,1060.2 120.2,1018.3 58.3,970.4" fill="#ffd2d2"/>
<polygon class="ns" points="255.3,1001.8 358.2,1034.9 367.8,1054.9 372.2,1077.6 239.7,1070.6" fill="#ffd2d2"/>
</g>
<polygon points="239.7,1071.5 308.5,1075.0 305.0,1079.3 292.0,1081.1 292.0,1102.0 284.1,1103.8 271.9,1099.4 237.9,1086.3" fill="#50ffa8"/>
<polygon points="311.1,1075.5 348.6,1077.6 346.0,1083.7 336.4,1089.8 315.5,1090.7 315.5,1081.1 306.8,1080.2" fill="#50ffa8"/>
<polygon points="433.1,1080.0 470.0,1059.4 495.0,1050.6 505.0,1071.2 487.5,1080.0 456.2,1090.0 433.1,1091.2" fill="#50ffa8"/>
<polygon points="498.8,1046.2 525.0,1030.0 562.5,1030.0 547.5,1037.5 537.5,1051.2 522.5,1057.5 510.0,1068.8 506.2,1068.8" fill="#50ffa8"/>
<g style="stroke:none">
<polygon class="ns" points="239.7,1071.5 308.5,1075.0 305.0,1079.3 292.0,1081.1 292.0,1102.0 284.1,1103.8 271.9,1099.4 237.9,1086.3" fill="#50ffa8"/>
<polygon class="ns" points="311.1,1075.5 348.6,1077.6 346.0,1083.7 336.4,1089.8 315.5,1090.7 315.5,1081.1 306.8,1080.2" fill="#50ffa8"/>
<polygon class="ns" points="433.1,1080.0 470.0,1059.4 495.0,1050.6 505.0,1071.2 487.5,1080.0 456.2,1090.0 433.1,1091.2" fill="#50ffa8"/>
<polygon class="ns" points="498.8,1046.2 525.0,1030.0 562.5,1030.0 547.5,1037.5 537.5,1051.2 522.5,1057.5 510.0,1068.8 506.2,1068.8" fill="#50ffa8"/>
</g>
<polygon points="1070.5,482.5 1076.2,483.0 1073.8,492.5 1068.8,492.0" fill="#0096d2"/>
<polygon points="1101.2,495.5 1108.0,490.0 1113.8,496.2 1107.0,502.0" fill="#6464ff"/>
<polygon points="546.2,1042.5 557.5,1036.2 570.0,1034.4 578.8,1035.6 580.0,1042.5 572.5,1043.8 573.8,1055.0 578.8,1060.0 580.0,1067.5 596.2,1072.5 597.5,1082.9 555.0,1082.9 557.5,1067.5 547.5,1055.0" fill="#00d200"/>
<polygon points="517.5,1066.2 538.8,1063.8 547.5,1080.0 546.2,1082.9 521.2,1082.9" fill="#00d200"/>
<polygon points="505.0,1075.0 516.2,1082.9 498.8,1082.9" fill="#00d200"/>
<g style="stroke:none">
<polygon class="ns" points="546.2,1042.5 557.5,1036.2 570.0,1034.4 578.8,1035.6 580.0,1042.5 572.5,1043.8 573.8,1055.0 578.8,1060.0 580.0,1067.5 596.2,1072.5 597.5,1082.9 555.0,1082.9 557.5,1067.5 547.5,1055.0" fill="#00d200"/>
<polygon class="ns" points="517.5,1066.2 538.8,1063.8 547.5,1080.0 546.2,1082.9 521.2,1082.9" fill="#00d200"/>
<polygon class="ns" points="505.0,1075.0 516.2,1082.9 498.8,1082.9" fill="#00d200"/>
</g>
<polygon points="699.4,1065.0 705.0,1061.2 731.2,1073.1 728.8,1082.9 702.5,1082.9" fill="#00ab5a"/>
<polygon points="699.4,1063.8 705.0,1061.2 731.2,1073.1 729.4,1079.4 740.6,1084.4 738.8,1093.8 733.1,1091.9 712.5,1112.5 705.6,1110.6" fill="#00ab5a"/>
<polygon points="746.2,1079.4 771.9,1090.0 766.2,1098.8 758.1,1099.4 756.2,1097.5 752.5,1100.0 741.2,1094.4" fill="#00ab5a"/>
<polygon points="775.6,1095.6 794.4,1127.5 786.9,1131.9 766.2,1105.6 768.1,1103.8" fill="#00ab5a"/>
<g style="stroke:none">
<polygon class="ns" points="699.4,1065.0 705.0,1061.2 731.2,1073.1 728.8,1082.9 702.5,1082.9" fill="#00ab5a"/>
<polygon class="ns" points="699.4,1063.8 705.0,1061.2 731.2,1073.1 729.4,1079.4 740.6,1084.4 738.8,1093.8 733.1,1091.9 712.5,1112.5 705.6,1110.6" fill="#00ab5a"/>
<polygon class="ns" points="746.2,1079.4 771.9,1090.0 766.2,1098.8 758.1,1099.4 756.2,1097.5 752.5,1100.0 741.2,1094.4" fill="#00ab5a"/>
<polygon class="ns" points="775.6,1095.6 794.4,1127.5 786.9,1131.9 766.2,1105.6 768.1,1103.8" fill="#00ab5a"/>
</g>
<polygon points="752.5,1100.0 756.2,1097.5 758.1,1099.4 766.2,1098.8 768.1,1103.8 766.2,1105.6 768.8,1108.8 757.5,1118.8 746.2,1106.2" fill="#d2ffff"/>
<polygon points="705.0,1128.1 733.1,1128.8 733.8,1140.0 705.0,1140.0" fill="#d2ffff"/>
<g style="stroke:none">
<polygon class="ns" points="752.5,1100.0 756.2,1097.5 758.1,1099.4 766.2,1098.8 768.1,1103.8 766.2,1105.6 768.8,1108.8 757.5,1118.8 746.2,1106.2" fill="#d2ffff"/>
<polygon class="ns" points="705.0,1128.1 733.1,1128.8 733.8,1140.0 705.0,1140.0" fill="#d2ffff"/>
</g>
<polygon points="658.1,1156.9 665.0,1151.2 681.2,1142.5 695.0,1140.0 728.8,1139.4 729.4,1147.5 740.0,1155.0 752.5,1158.8 766.2,1167.5 702.5,1171.2 682.5,1173.1 671.2,1181.2" fill="#00ab5a"/>
<polygon points="581.2,1120.6 590.0,1123.8 601.2,1105.0 622.5,1116.2 618.8,1121.9 658.1,1156.9 646.2,1158.5 618.8,1141.9 607.5,1157.5 605.0,1170.0 597.5,1176.2 591.2,1178.8 583.8,1178.1 578.8,1183.1 573.8,1180.0 576.2,1161.2 583.1,1154.4 576.2,1146.2 577.5,1132.5" fill="#00ab5a"/>
<g style="stroke:none">
<polygon class="ns" points="658.1,1156.9 665.0,1151.2 681.2,1142.5 695.0,1140.0 728.8,1139.4 729.4,1147.5 740.0,1155.0 752.5,1158.8 766.2,1167.5 702.5,1171.2 682.5,1173.1 671.2,1181.2" fill="#00ab5a"/>
<polygon class="ns" points="581.2,1120.6 590.0,1123.8 601.2,1105.0 622.5,1116.2 618.8,1121.9 658.1,1156.9 646.2,1158.5 618.8,1141.9 607.5,1157.5 605.0,1170.0 597.5,1176.2 591.2,1178.8 583.8,1178.1 578.8,1183.1 573.8,1180.0 576.2,1161.2 583.1,1154.4 576.2,1146.2 577.5,1132.5" fill="#00ab5a"/>
</g>
<polygon points="598.8,1232.5 671.2,1181.2 682.5,1173.1 702.5,1171.2 765.0,1168.1 768.8,1172.5 767.5,1181.2 761.2,1191.9 782.5,1200.0 790.0,1202.5 790.0,1208.8 792.5,1211.2 793.1,1220.0 796.2,1221.9 793.8,1226.2 785.0,1226.2 777.5,1221.2 725.0,1220.0 700.0,1216.9 698.8,1203.8 693.8,1203.8 693.1,1223.8 685.0,1224.4 683.8,1228.8 655.0,1231.9 615.0,1242.9 607.5,1242.9" fill="#e0e0e0"/>
<polygon points="1080.8,724.9 1094.5,726.1 1094.5,728.6 1080.8,727.8" fill="#d2ffff"/>
<polygon points="1088.2,807.8 1099.5,806.8 1100.1,810.5 1088.5,811.5" fill="#d2ffff"/>
<polygon points="1098.2,901.0 1110.8,900.4 1110.8,906.0 1098.2,907.2" fill="#d2ffff"/>
<g style="stroke:none">
<polygon class="ns" points="1080.8,724.9 1094.5,726.1 1094.5,728.6 1080.8,727.8" fill="#d2ffff"/>
<polygon class="ns" points="1088.2,807.8 1099.5,806.8 1100.1,810.5 1088.5,811.5" fill="#d2ffff"/>
<polygon class="ns" points="1098.2,901.0 1110.8,900.4 1110.8,906.0 1098.2,907.2" fill="#d2ffff"/>
</g>
<polygon points="1161.4,615.0 1174.5,620.0 1173.2,622.9 1163.2,622.9" fill="#50ffa8"/>
<polygon points="1030.6,1156.9 1008.8,1172.5 989.4,1186.2 985.0,1205.0 981.9,1216.2 980.0,1221.2 965.0,1225.6 963.1,1228.1 980.0,1230.0 986.9,1232.5 1008.8,1193.8 1037.5,1147.5" fill="#50ffa8"/>
<polygon points="933.8,1235.6 970.0,1235.0 983.8,1236.9 982.5,1245.0 970.0,1246.2 958.8,1265.0 946.9,1267.5 946.2,1275.0 937.5,1280.0 925.0,1275.0 931.2,1255.0" fill="#50ffa8"/>
<g style="stroke:none">
<polygon class="ns" points="1161.4,615.0 1174.5,620.0 1173.2,622.9 1163.2,622.9" fill="#50ffa8"/>
<polygon class="ns" points="1030.6,1156.9 1008.8,1172.5 989.4,1186.2 985.0,1205.0 981.9,1216.2 980.0,1221.2 965.0,1225.6 963.1,1228.1 980.0,1230.0 986.9,1232.5 1008.8,1193.8 1037.5,1147.5" fill="#50ffa8"/>
<polygon class="ns" points="933.8,1235.6 970.0,1235.0 983.8,1236.9 982.5,1245.0 970.0,1246.2 958.8,1265.0 946.9,1267.5 946.2,1275.0 937.5,1280.0 925.0,1275.0 931.2,1255.0" fill="#50ffa8"/>
</g>
<polygon points="926.9,1268.8 933.1,1272.5 937.5,1282.9 921.2,1282.9" fill="#ff0a82"/>
<polygon points="900.0,1253.8 916.2,1254.4 912.5,1270.0 903.8,1278.8 900.0,1280.0" fill="#50ffa8"/>
<polygon points="950.0,1145.6 970.0,1131.9 980.0,1138.1 985.0,1142.5 995.0,1141.2 1008.8,1161.9 986.2,1183.8 976.2,1217.5 949.4,1221.9 938.1,1220.0 948.1,1167.5" fill="#c39bb9"/>
<polygon points="901.9,1166.2 931.2,1161.9 933.1,1166.2 935.0,1163.1 936.9,1172.5 926.9,1216.9 922.5,1215.6 903.8,1183.8" fill="#c39bb9"/>
<g style="stroke:none">
<polygon class="ns" points="950.0,1145.6 970.0,1131.9 980.0,1138.1 985.0,1142.5 995.0,1141.2 1008.8,1161.9 986.2,1183.8 976.2,1217.5 949.4,1221.9 938.1,1220.0 948.1,1167.5" fill="#c39bb9"/>
<polygon class="ns" points="901.9,1166.2 931.2,1161.9 933.1,1166.2 935.0,1163.1 936.9,1172.5 926.9,1216.9 922.5,1215.6 903.8,1183.8" fill="#c39bb9"/>
</g>
<polygon points="903.8,1150.0 907.5,1144.4 925.0,1143.1 929.4,1147.5 930.0,1153.1 925.0,1158.8 905.0,1162.5" fill="#0096d2"/>
<polygon points="900.0,1186.2 903.8,1185.0 922.5,1216.2 926.9,1217.5 926.9,1219.4 912.5,1218.1 900.0,1205.0" fill="#50ffa8"/>
<polygon points="844.4,652.8 860.6,658.0 857.5,668.0 841.0,662.8" fill="#80ff00"/>
<polygon points="883.8,978.1 903.8,970.0 908.1,976.2 890.0,1000.6 883.1,998.1 880.6,991.2" fill="#dc8cd2"/>
<polygon points="953.8,1040.6 962.5,1036.2 972.5,1046.9 961.9,1054.4" fill="#6464ff"/>
<polygon points="926.9,1055.6 938.8,1045.6 951.2,1061.9 936.9,1073.8 930.0,1063.8 932.5,1061.9" fill="#ff0a82"/>
<polygon points="902.5,1114.4 915.0,1106.2 918.8,1109.4 914.4,1118.8 908.1,1123.8" fill="#ff0a82"/>
<polygon points="779.5,1090.0 791.4,1080.6 793.9,1083.8 807.0,1083.5 828.2,1112.5 810.8,1118.8 808.9,1113.8 802.6,1115.6 804.5,1120.0 797.6,1116.9" fill="#ff0a82"/>
<polygon points="902.6,1113.8 914.5,1106.2 918.9,1109.4 915.1,1118.1 908.9,1123.8" fill="#ff0a82"/>
<polygon points="879.5,1135.0 893.2,1126.2 899.5,1123.8 908.2,1135.6 893.2,1154.4 885.8,1147.5" fill="#ff0a82"/>
<g style="stroke:none">
<polygon class="ns" points="926.9,1055.6 938.8,1045.6 951.2,1061.9 936.9,1073.8 930.0,1063.8 932.5,1061.9" fill="#ff0a82"/>
<polygon class="ns" points="902.5,1114.4 915.0,1106.2 918.8,1109.4 914.4,1118.8 908.1,1123.8" fill="#ff0a82"/>
<polygon class="ns" points="779.5,1090.0 791.4,1080.6 793.9,1083.8 807.0,1083.5 828.2,1112.5 810.8,1118.8 808.9,1113.8 802.6,1115.6 804.5,1120.0 797.6,1116.9" fill="#ff0a82"/>
<polygon class="ns" points="902.6,1113.8 914.5,1106.2 918.9,1109.4 915.1,1118.1 908.9,1123.8" fill="#ff0a82"/>
<polygon class="ns" points="879.5,1135.0 893.2,1126.2 899.5,1123.8 908.2,1135.6 893.2,1154.4 885.8,1147.5" fill="#ff0a82"/>
</g>
<polygon points="747.0,1106.1 761.8,1100.0 768.7,1107.8 757.4,1118.7" fill="#d2ffff"/>
<polygon points="765.3,1104.8 778.3,1100.0 794.4,1126.1 787.0,1131.8 766.1,1113.1" fill="#00ab5a"/>
<polygon points="933.2,1236.2 950.8,1242.5 949.5,1247.5 935.8,1252.5 939.5,1261.2 942.0,1265.0 953.2,1260.0 954.5,1265.6 945.8,1266.2 938.2,1280.0 934.5,1272.5 927.0,1268.1 928.2,1255.0" fill="#50ffa8"/>
<polygon points="963.2,1237.5 982.0,1236.2 982.0,1250.0 969.5,1245.6 960.1,1267.5 957.0,1257.5" fill="#50ffa8"/>
<g style="stroke:none">
<polygon class="ns" points="933.2,1236.2 950.8,1242.5 949.5,1247.5 935.8,1252.5 939.5,1261.2 942.0,1265.0 953.2,1260.0 954.5,1265.6 945.8,1266.2 938.2,1280.0 934.5,1272.5 927.0,1268.1 928.2,1255.0" fill="#50ffa8"/>
<polygon class="ns" points="963.2,1237.5 982.0,1236.2 982.0,1250.0 969.5,1245.6 960.1,1267.5 957.0,1257.5" fill="#50ffa8"/>
</g>
<polygon points="363.5,1053.2 430.6,1050.6 431.5,1045.3 436.7,1045.3 440.3,1051.4 441.2,1061.2 420.0,1078.8 422.5,1090.0 433.1,1091.2 456.2,1090.0 487.5,1080.0 505.0,1071.2 510.0,1068.8 522.5,1057.5 537.5,1051.2 547.5,1037.5 580.0,1035.0 581.2,1042.5 575.0,1043.8 577.5,1065.0 597.5,1070.0 597.5,1080.0 576.2,1090.0 576.2,1142.5 583.1,1153.8 573.8,1167.5 572.5,1180.0 566.2,1188.8 568.8,1202.5 572.5,1225.0 567.0,1257.8 505.0,1264.0 458.5,1270.1 365.5,1295.0 212.5,1295.0 115.0,1190.0 230.0,1115.0 235.3,1093.3 266.7,1100.3 371.3,1082.8" fill="#00d200"/>
<polygon points="638.8,1160.0 646.2,1158.1 658.1,1156.9 671.2,1181.2 665.0,1183.8 651.2,1166.2 643.8,1163.8" fill="#d2ffff"/>
<polygon points="618.8,1141.9 646.2,1158.8 643.8,1163.8 651.2,1166.2 662.5,1177.5 643.8,1191.2 627.5,1201.2 593.8,1211.2 586.2,1205.0 578.8,1190.0 580.0,1183.8 583.8,1178.1 591.2,1178.8 597.5,1176.2 605.0,1170.0 607.5,1157.5" fill="#0080ff"/>
<polygon points="693.8,1203.8 698.8,1203.8 700.0,1216.9 723.8,1220.0 724.4,1242.9 702.5,1242.9 701.2,1223.8 693.1,1223.1" fill="#ffa0d2"/>
<polygon points="583.8,1103.1 591.2,1102.5 591.2,1113.8 584.4,1114.4" fill="#00d200"/>
<polygon points="1188.8,590.0 1180.0,600.0 1172.5,622.5 1155.0,650.0 1177.0,623.0 1162.0,641.8 1154.5,660.5 1134.5,666.8 1128.2,681.8 1118.2,691.1 1099.5,700.5 1088.2,709.2 1093.2,718.0 1095.8,733.0 1103.2,748.0 1104.5,758.0 1098.2,770.5 1097.0,780.5 1099.5,803.0 1103.2,818.0 1105.8,825.9 1108.2,848.5 1117.6,867.2 1110.8,896.0 1108.2,938.5 1105.8,969.8 1098.2,991.0 1095.8,1007.2 1099.5,1023.5 1102.0,1028.9 1102.5,1023.8 1103.8,1047.5 1075.0,1040.0 1063.8,1053.8 1060.0,1060.0 1056.9,1067.5 1065.0,1077.5 1070.0,1085.0 1052.5,1111.2 1045.0,1132.9 1068.8,1086.2 1060.0,1097.5 1051.2,1110.0 1047.5,1128.8 1043.8,1135.0 1087.5,1135.0 1140.0,1055.0 1140.0,930.0 1199.5,825.9 1199.5,623.0" fill="#0080ff"/>
<polygon points="1175.8,596.9 1187.6,589.4 1190.8,595.0 1188.2,607.5 1184.5,616.2 1180.1,622.9 1174.5,622.9 1180.1,611.2 1179.5,603.8" fill="#0080ff"/>
<polygon points="1002.5,1176.2 1006.2,1172.5 1016.9,1177.5 1012.5,1183.8 1008.8,1178.8 1003.8,1180.0" fill="#0080ff"/>
<polygon points="1013.1,1184.4 1006.2,1188.8 998.8,1197.5 990.0,1201.9 987.5,1210.0 982.5,1216.2 980.0,1221.2 965.0,1225.6 952.5,1230.6 931.9,1229.4 934.4,1236.2 950.0,1242.5 951.2,1247.5 937.5,1252.5 935.6,1256.2 939.4,1262.5 942.5,1265.0 953.8,1258.8 962.5,1238.8 970.0,1235.0 983.8,1236.9 986.9,1232.5 993.1,1208.8 1008.8,1193.8" fill="#0080ff"/>
<g style="stroke:none">
<polygon class="ns" points="1188.8,590.0 1180.0,600.0 1172.5,622.5 1155.0,650.0 1177.0,623.0 1162.0,641.8 1154.5,660.5 1134.5,666.8 1128.2,681.8 1118.2,691.1 1099.5,700.5 1088.2,709.2 1093.2,718.0 1095.8,733.0 1103.2,748.0 1104.5,758.0 1098.2,770.5 1097.0,780.5 1099.5,803.0 1103.2,818.0 1105.8,825.9 1108.2,848.5 1117.6,867.2 1110.8,896.0 1108.2,938.5 1105.8,969.8 1098.2,991.0 1095.8,1007.2 1099.5,1023.5 1102.0,1028.9 1102.5,1023.8 1103.8,1047.5 1075.0,1040.0 1063.8,1053.8 1060.0,1060.0 1056.9,1067.5 1065.0,1077.5 1070.0,1085.0 1052.5,1111.2 1045.0,1132.9 1068.8,1086.2 1060.0,1097.5 1051.2,1110.0 1047.5,1128.8 1043.8,1135.0 1087.5,1135.0 1140.0,1055.0 1140.0,930.0 1199.5,825.9 1199.5,623.0" fill="#0080ff"/>
<polygon class="ns" points="1175.8,596.9 1187.6,589.4 1190.8,595.0 1188.2,607.5 1184.5,616.2 1180.1,622.9 1174.5,622.9 1180.1,611.2 1179.5,603.8" fill="#0080ff"/>
<polygon class="ns" points="1002.5,1176.2 1006.2,1172.5 1016.9,1177.5 1012.5,1183.8 1008.8,1178.8 1003.8,1180.0" fill="#0080ff"/>
<polygon class="ns" points="1013.1,1184.4 1006.2,1188.8 998.8,1197.5 990.0,1201.9 987.5,1210.0 982.5,1216.2 980.0,1221.2 965.0,1225.6 952.5,1230.6 931.9,1229.4 934.4,1236.2 950.0,1242.5 951.2,1247.5 937.5,1252.5 935.6,1256.2 939.4,1262.5 942.5,1265.0 953.8,1258.8 962.5,1238.8 970.0,1235.0 983.8,1236.9 986.9,1232.5 993.1,1208.8 1008.8,1193.8" fill="#0080ff"/>
</g>
<polygon points="906.9,1256.2 914.4,1257.5 912.5,1266.2 905.0,1264.4" fill="#800000"/>
<polygon points="900.0,1247.5 916.2,1248.1 918.1,1250.0 900.0,1251.9" fill="#0080ff"/>
<polygon points="911.2,1159.4 918.8,1159.0 918.8,1162.5 911.9,1162.8" fill="#ff0000"/>
<polygon points="930.6,1161.2 934.4,1160.6 935.0,1165.6 931.2,1166.2" fill="#c896ff"/>
<polygon points="900.0,1215.0 912.5,1218.8 926.9,1220.0 926.2,1227.5 923.8,1230.0 925.6,1233.1 900.0,1230.0" fill="#0080ff"/>
<polygon points="802.6,1115.6 808.9,1113.8 810.8,1118.8 804.5,1120.6" fill="#c896ff"/>
<polygon points="740.0,1103.5 748.7,1110.5 757.4,1120.0 766.1,1128.7 774.8,1141.8 777.5,1148.8 779.2,1155.7 785.3,1163.6 794.0,1166.2 801.0,1165.3 806.2,1160.1 807.1,1154.0 804.5,1148.8 803.6,1146.2 809.7,1140.9 807.9,1134.8 807.1,1132.2 832.3,1121.8 833.6,1123.5 833.2,1141.8 829.7,1150.5 823.6,1161.0 821.0,1169.7 820.6,1176.7 823.6,1185.4 829.7,1195.8 834.1,1200.2 838.4,1198.4 847.1,1199.3 851.5,1195.8 853.2,1189.7 858.5,1187.1 879.4,1175.8 895.1,1187.1 893.3,1202.8 905.5,1215.9 914.2,1220.2 923.8,1223.7 926.8,1228.0 924.7,1234.1 913.3,1233.3 888.1,1228.0 879.4,1222.0 874.1,1213.2 868.0,1210.2 864.6,1212.4 868.0,1217.6 868.9,1223.7 867.2,1230.7 868.9,1235.9 875.9,1242.9 828.0,1242.9 826.2,1235.9 827.1,1226.3 829.7,1215.9 827.1,1208.9 818.4,1198.4 809.7,1190.6 797.5,1181.9 800.1,1176.7 798.4,1173.2 785.3,1168.8 779.2,1161.0 773.1,1143.6 761.8,1132.2 748.7,1120.0 740.0,1114.8" fill="#0080ff"/>
<polygon points="827.5,1210.0 825.6,1228.8 830.0,1241.2 840.0,1250.0 852.5,1255.0 866.2,1261.2 875.0,1263.1 881.2,1257.5 896.2,1255.0 901.2,1251.9 915.0,1251.2 918.1,1248.8 908.8,1247.5 881.2,1246.2 875.0,1250.0 867.5,1250.0 863.1,1246.2 865.0,1237.5 870.0,1227.5 870.0,1210.0" fill="#0080ff"/>
<g style="stroke:none">
<polygon class="ns" points="740.0,1103.5 748.7,1110.5 757.4,1120.0 766.1,1128.7 774.8,1141.8 777.5,1148.8 779.2,1155.7 785.3,1163.6 794.0,1166.2 801.0,1165.3 806.2,1160.1 807.1,1154.0 804.5,1148.8 803.6,1146.2 809.7,1140.9 807.9,1134.8 807.1,1132.2 832.3,1121.8 833.6,1123.5 833.2,1141.8 829.7,1150.5 823.6,1161.0 821.0,1169.7 820.6,1176.7 823.6,1185.4 829.7,1195.8 834.1,1200.2 838.4,1198.4 847.1,1199.3 851.5,1195.8 853.2,1189.7 858.5,1187.1 879.4,1175.8 895.1,1187.1 893.3,1202.8 905.5,1215.9 914.2,1220.2 923.8,1223.7 926.8,1228.0 924.7,1234.1 913.3,1233.3 888.1,1228.0 879.4,1222.0 874.1,1213.2 868.0,1210.2 864.6,1212.4 868.0,1217.6 868.9,1223.7 867.2,1230.7 868.9,1235.9 875.9,1242.9 828.0,1242.9 826.2,1235.9 827.1,1226.3 829.7,1215.9 827.1,1208.9 818.4,1198.4 809.7,1190.6 797.5,1181.9 800.1,1176.7 798.4,1173.2 785.3,1168.8 779.2,1161.0 773.1,1143.6 761.8,1132.2 748.7,1120.0 740.0,1114.8" fill="#0080ff"/>
<polygon class="ns" points="827.5,1210.0 825.6,1228.8 830.0,1241.2 840.0,1250.0 852.5,1255.0 866.2,1261.2 875.0,1263.1 881.2,1257.5 896.2,1255.0 901.2,1251.9 915.0,1251.2 918.1,1248.8 908.8,1247.5 881.2,1246.2 875.0,1250.0 867.5,1250.0 863.1,1246.2 865.0,1237.5 870.0,1227.5 870.0,1210.0" fill="#0080ff"/>
</g>
<polygon points="146.1,1192.1 171.4,1173.8 177.5,1180.8 192.3,1206.9 199.3,1217.4 157.4,1217.4" fill="#a0ffd2"/>
<polygon points="362.4,1245.4 381.0,1236.1 427.5,1217.5 474.0,1208.2 498.8,1211.3 505.0,1229.9 501.9,1242.3 517.4,1251.6 567.0,1229.9 579.4,1242.3 576.3,1267.1 536.0,1276.4 514.3,1273.3 498.8,1264.0 458.5,1276.4 350.0,1315.1 319.0,1315.1 319.0,1264.0 350.0,1254.7" fill="#0080ff"/>
<polygon points="568.8,1202.5 577.5,1201.2 591.2,1225.0 575.0,1232.9 572.5,1225.0" fill="#50ffa8"/>
<polygon points="1073.8,1048.8 1080.0,1047.5 1093.8,1055.0 1091.2,1063.8 1085.0,1065.0 1072.5,1057.5" fill="#50ffa8"/>
<polygon points="1071.2,1075.6 1074.4,1072.5 1077.5,1075.6 1074.4,1078.8" fill="#50ffa8"/>
<g style="stroke:none">
<polygon class="ns" points="1073.8,1048.8 1080.0,1047.5 1093.8,1055.0 1091.2,1063.8 1085.0,1065.0 1072.5,1057.5" fill="#50ffa8"/>
<polygon class="ns" points="1071.2,1075.6 1074.4,1072.5 1077.5,1075.6 1074.4,1078.8" fill="#50ffa8"/>
</g>
<polygon points="1008.8,1194.4 995.0,1206.2 992.5,1212.5 987.5,1231.9 990.0,1231.9 1012.5,1193.1" fill="#d2ffff"/>
<polygon points="911.9,1227.5 917.5,1223.8 923.8,1226.9 917.5,1230.0" fill="#50ffa8"/>
<polygon points="779.2,1100.0 785.3,1100.0 796.6,1117.4 805.3,1121.8 810.6,1118.7 831.5,1112.2 834.9,1112.2 847.1,1123.5 863.7,1142.7 855.9,1145.3 835.8,1122.6 832.3,1121.8 807.1,1132.2 807.9,1134.8 809.7,1140.9 803.6,1146.6 801.4,1144.4 802.7,1138.3 794.0,1126.1" fill="#d2ffff"/>
<polygon points="833.6,1123.5 855.9,1145.3 836.3,1182.8 823.6,1164.5 829.7,1150.5 833.2,1141.8" fill="#50ffa8"/>
<polygon points="855.9,1145.3 863.7,1142.7 838.4,1186.2 836.3,1182.8" fill="#d2ffff"/>
<polygon points="863.7,1144.0 865.9,1150.5 869.8,1155.7 875.0,1169.7 842.8,1188.9 839.3,1188.9 838.4,1186.2" fill="#0080ff"/>
<polygon points="875.0,1169.7 892.4,1161.0 903.8,1162.7 879.4,1175.8 858.5,1187.1 853.2,1189.7 851.5,1195.8 847.1,1199.3 838.4,1198.4 834.1,1200.2 829.7,1195.8 836.3,1182.8 838.4,1186.2 839.3,1188.9 842.8,1188.9" fill="#d2ffff"/>
<polygon points="820.6,1171.4 823.6,1169.7 832.3,1189.7 829.7,1195.8 823.6,1185.4" fill="#50ffa8"/>
<polygon points="847.1,1123.5 882.9,1100.0 900.3,1123.5 895.1,1126.1 879.4,1135.7 893.3,1154.9 876.8,1170.6 869.8,1155.7 865.9,1150.5 863.7,1142.7" fill="#ffff80"/>
<polygon points="881.1,1174.5 893.3,1166.2 896.8,1167.1 902.9,1185.4 895.9,1188.9" fill="#ffff80"/>
<g style="stroke:none">
<polygon class="ns" points="847.1,1123.5 882.9,1100.0 900.3,1123.5 895.1,1126.1 879.4,1135.7 893.3,1154.9 876.8,1170.6 869.8,1155.7 865.9,1150.5 863.7,1142.7" fill="#ffff80"/>
<polygon class="ns" points="881.1,1174.5 893.3,1166.2 896.8,1167.1 902.9,1185.4 895.9,1188.9" fill="#ffff80"/>
</g>
<polygon points="868.9,1223.7 879.4,1233.3 914.2,1239.4 914.2,1242.9 868.0,1242.9" fill="#50ffa8"/>
<polygon points="899.4,1188.0 902.9,1186.2 923.8,1215.9 927.3,1217.2 926.8,1219.3 917.7,1216.7 903.8,1194.9" fill="#50ffa8"/>
<g style="stroke:none">
<polygon class="ns" points="868.9,1223.7 879.4,1233.3 914.2,1239.4 914.2,1242.9 868.0,1242.9" fill="#50ffa8"/>
<polygon class="ns" points="899.4,1188.0 902.9,1186.2 923.8,1215.9 927.3,1217.2 926.8,1219.3 917.7,1216.7 903.8,1194.9" fill="#50ffa8"/>
</g>
<polygon points="740.0,1151.4 768.7,1160.1 773.1,1165.3 774.8,1187.1 789.7,1202.8 818.4,1207.1 819.3,1210.6 792.3,1208.0 788.8,1226.3 782.7,1226.3 787.0,1217.6 781.8,1208.9 780.1,1201.0 761.8,1191.5 766.1,1183.6 767.9,1172.3 766.1,1167.9 755.7,1161.0 740.0,1156.6" fill="#d2ffff"/>
<polygon points="792.3,1208.0 819.3,1210.6 814.0,1242.9 740.0,1242.9 740.0,1230.7 781.8,1227.2 788.8,1226.3" fill="#ffff80"/>
<polygon points="429.0,1254.7 439.9,1243.8 458.5,1239.2 463.1,1243.8 452.3,1253.1 435.2,1259.3" fill="#50ffa8"/>
<polygon points="349.4,1298.1 357.7,1299.6 357.7,1305.8 349.4,1307.4" fill="#50ffa8"/>
<g style="stroke:none">
<polygon class="ns" points="429.0,1254.7 439.9,1243.8 458.5,1239.2 463.1,1243.8 452.3,1253.1 435.2,1259.3" fill="#50ffa8"/>
<polygon class="ns" points="349.4,1298.1 357.7,1299.6 357.7,1305.8 349.4,1307.4" fill="#50ffa8"/>
</g>
<polygon points="400.0,1110.0 418.8,1113.8 423.8,1122.5 418.8,1133.8 407.5,1142.5 400.0,1147.5" fill="#0080ff"/>
<polygon points="417.5,1155.0 421.2,1142.5 437.5,1135.6 447.5,1148.8 445.6,1161.2 447.5,1171.2 431.2,1168.8 421.2,1171.2 416.2,1165.0" fill="#0080ff"/>
<polygon points="447.5,1171.2 460.0,1175.6 462.5,1161.2 481.2,1160.0 500.0,1161.2 508.8,1158.8 510.0,1163.1 498.8,1178.8 505.0,1184.4 523.8,1176.2 528.8,1182.5 512.5,1191.2 485.6,1195.0 482.5,1175.0 475.0,1171.2 456.2,1177.5" fill="#0080ff"/>
<polygon points="567.5,1232.9 572.5,1226.2 578.8,1228.8 580.0,1232.9" fill="#0080ff"/>
<g style="stroke:none">
<polygon class="ns" points="400.0,1110.0 418.8,1113.8 423.8,1122.5 418.8,1133.8 407.5,1142.5 400.0,1147.5" fill="#0080ff"/>
<polygon class="ns" points="417.5,1155.0 421.2,1142.5 437.5,1135.6 447.5,1148.8 445.6,1161.2 447.5,1171.2 431.2,1168.8 421.2,1171.2 416.2,1165.0" fill="#0080ff"/>
<polygon class="ns" points="447.5,1171.2 460.0,1175.6 462.5,1161.2 481.2,1160.0 500.0,1161.2 508.8,1158.8 510.0,1163.1 498.8,1178.8 505.0,1184.4 523.8,1176.2 528.8,1182.5 512.5,1191.2 485.6,1195.0 482.5,1175.0 475.0,1171.2 456.2,1177.5" fill="#0080ff"/>
<polygon class="ns" points="567.5,1232.9 572.5,1226.2 578.8,1228.8 580.0,1232.9" fill="#0080ff"/>
</g>
<g fill="none" stroke="#6e6e6e" stroke-linejoin="round">
<polyline points="568.8,1181.2 576.2,1196.2 595.0,1221.2 600.0,1232.5" stroke-width="7.4"/>
<polyline points="597.5,1221.2 627.5,1203.1 665.0,1179.4" stroke-width="6.9"/>
<polyline points="742.5,1110.0 736.2,1104.4 725.0,1116.2 713.8,1123.1 701.2,1118.8 692.5,1103.8 688.1,1078.8 678.8,1056.2 666.2,1047.5 650.0,1045.0 635.0,1043.8 625.0,1038.8" stroke-width="10.4"/>
<polyline points="621.2,1038.8 621.2,1055.0 627.5,1077.5 633.8,1098.8 643.8,1111.2 648.1,1120.0" stroke-width="8.9"/>
<polyline points="648.1,1120.0 649.8,1129.4" stroke-width="4.9"/>
<polyline points="598.8,1062.5 605.0,1083.8 610.0,1096.2 627.5,1105.0 636.2,1108.1" stroke-width="7.9"/>
<polyline points="577.5,1038.8 578.8,1062.5 590.0,1072.5 598.8,1081.2" stroke-width="10.4"/>
<polyline points="687.5,1038.8 698.8,1053.8" stroke-width="9.4"/>
<polyline points="605.0,1010.6 618.8,1013.1 621.2,1018.8 616.2,1026.2 608.8,1033.1 596.2,1039.4 593.1,1047.5 591.2,1057.5" stroke-width="9.4"/>
<polyline points="623.8,1018.1 642.5,1016.2 661.2,1019.4 682.5,1028.1 692.5,1041.2 698.8,1055.0" stroke-width="9.4"/>
<polyline points="617.5,1046.2 621.9,1040.6 631.2,1044.4 638.8,1055.0 648.8,1060.0 655.0,1041.9 663.8,1039.4 675.0,1055.0 685.0,1082.9" stroke-width="8.9"/>
<polyline points="567.5,1029.4 550.0,1034.4 540.0,1042.5 535.6,1055.0 516.2,1063.8 496.2,1075.0 480.0,1083.8" stroke-width="10.4"/>
<polyline points="575.6,1042.5 579.4,1055.0 590.0,1060.6 600.0,1075.0 605.0,1083.8" stroke-width="10.4"/>
<polyline points="243.8,1093.8 255.0,1100.0 270.0,1104.4 282.5,1105.6 292.5,1102.5 302.5,1095.0 326.2,1091.9 356.2,1093.8" stroke-width="15.3"/>
<polyline points="262.5,1105.0 266.2,1113.8 295.0,1118.8 311.2,1116.9 357.5,1118.1" stroke-width="13.0"/>
<polyline points="357.5,1118.1 360.0,1137.5 345.0,1160.0" stroke-width="15.3"/>
<polyline points="231.2,1118.8 239.4,1118.8 240.6,1131.2 233.8,1141.2" stroke-width="15.3"/>
<polyline points="261.2,1107.5 256.2,1123.8 250.0,1142.5 240.0,1162.5 228.8,1177.5" stroke-width="16.4"/>
<polyline points="228.8,1177.5 211.2,1171.2 201.2,1165.0 183.8,1168.1" stroke-width="14.1"/>
<polyline points="201.2,1163.8 213.8,1152.5 221.9,1147.5" stroke-width="9.5"/>
<polyline points="295.0,1127.5 288.8,1145.0 276.2,1167.5 257.5,1183.8 247.5,1191.2" stroke-width="16.4"/>
<polyline points="315.0,1121.2 312.5,1146.2 301.2,1177.5 285.0,1200.0 273.8,1215.0" stroke-width="13.0"/>
<polyline points="256.2,1202.5 270.0,1216.2" stroke-width="10.7"/>
<polyline points="360.0,1137.5 347.5,1161.2 323.8,1188.8 302.5,1215.0 285.0,1236.2" stroke-width="14.1"/>
<polyline points="383.8,1118.8 377.5,1150.0 362.5,1180.0 338.8,1208.8 320.0,1206.2" stroke-width="14.1"/>
<polyline points="385.0,1115.0 421.2,1116.2" stroke-width="13.0"/>
<polyline points="421.2,1121.2 401.2,1146.2 393.8,1167.5 402.5,1171.2" stroke-width="16.4"/>
<polyline points="312.5,1208.8 313.8,1236.2" stroke-width="10.7"/>
<polyline points="313.8,1235.6 345.0,1233.8 367.5,1225.0 375.0,1205.0 385.0,1188.8 405.0,1196.2 425.0,1195.0 427.5,1182.5" stroke-width="14.1"/>
<polyline points="236.2,1208.8 232.5,1220.0 247.5,1226.2 258.8,1232.5" stroke-width="11.8"/>
<polyline points="181.2,1182.5 192.5,1193.8 216.2,1205.0" stroke-width="9.5"/>
<polyline points="400.0,1086.2 418.8,1095.0 437.5,1100.6 456.2,1095.0 477.5,1086.9 497.5,1080.0 512.5,1070.0 525.0,1061.2 537.5,1053.8" stroke-width="12.0"/>
<polyline points="537.5,1053.8 542.5,1043.8 552.5,1036.2 568.8,1031.9" stroke-width="10.2"/>
<polyline points="543.8,1046.2 551.2,1065.0 556.2,1086.2 553.1,1110.0 545.6,1132.5 543.8,1150.0 548.1,1168.8" stroke-width="10.8"/>
<polyline points="516.2,1067.5 526.2,1088.8 530.6,1110.0 527.5,1136.2 523.1,1156.2 510.0,1162.5" stroke-width="11.4"/>
<polyline points="508.8,1107.5 523.8,1106.2" stroke-width="6.4"/>
<polyline points="576.9,1045.0 579.4,1061.2 590.0,1067.5 600.0,1078.8" stroke-width="8.9"/>
<polyline points="600.0,1080.0 585.0,1086.9 577.5,1095.0 576.2,1130.0 567.5,1143.8 552.5,1146.9" stroke-width="10.2"/>
<polyline points="420.0,1156.2 422.5,1143.1 437.5,1136.2 468.8,1141.0 506.2,1134.8 525.0,1129.4" stroke-width="9.5"/>
<polyline points="512.5,1210.0 525.0,1203.1 550.0,1195.6 570.0,1194.4" stroke-width="10.2"/>
<polyline points="400.0,1173.8 416.2,1176.2 425.0,1191.2 421.2,1200.0 400.0,1203.1" stroke-width="7.7"/>
</g><g fill="none" stroke-linejoin="round" stroke-linecap="round">
<polyline points="568.8,1181.2 576.2,1196.2 595.0,1221.2 600.0,1232.5" stroke="#d2ffff" stroke-width="6.0"/>
<polyline points="597.5,1221.2 627.5,1203.1 665.0,1179.4" stroke="#d2ffff" stroke-width="5.5"/>
<polyline points="742.5,1110.0 736.2,1104.4 725.0,1116.2 713.8,1123.1 701.2,1118.8 692.5,1103.8 688.1,1078.8 678.8,1056.2 666.2,1047.5 650.0,1045.0 635.0,1043.8 625.0,1038.8" stroke="#0080ff" stroke-width="9.0"/>
<polyline points="621.2,1038.8 621.2,1055.0 627.5,1077.5 633.8,1098.8 643.8,1111.2 648.1,1120.0" stroke="#0080ff" stroke-width="7.5"/>
<polyline points="648.1,1120.0 649.8,1129.4" stroke="#0080ff" stroke-width="3.5"/>
<polyline points="598.8,1062.5 605.0,1083.8 610.0,1096.2 627.5,1105.0 636.2,1108.1" stroke="#0080ff" stroke-width="6.5"/>
<polyline points="577.5,1038.8 578.8,1062.5 590.0,1072.5 598.8,1081.2" stroke="#0080ff" stroke-width="9.0"/>
<polyline points="687.5,1038.8 698.8,1053.8" stroke="#0080ff" stroke-width="8.0"/>
<polyline points="605.0,1010.6 618.8,1013.1 621.2,1018.8 616.2,1026.2 608.8,1033.1 596.2,1039.4 593.1,1047.5 591.2,1057.5" stroke="#0080ff" stroke-width="8.0"/>
<polyline points="623.8,1018.1 642.5,1016.2 661.2,1019.4 682.5,1028.1 692.5,1041.2 698.8,1055.0" stroke="#0080ff" stroke-width="8.0"/>
<polyline points="617.5,1046.2 621.9,1040.6 631.2,1044.4 638.8,1055.0 648.8,1060.0 655.0,1041.9 663.8,1039.4 675.0,1055.0 685.0,1082.9" stroke="#0080ff" stroke-width="7.5"/>
<polyline points="567.5,1029.4 550.0,1034.4 540.0,1042.5 535.6,1055.0 516.2,1063.8 496.2,1075.0 480.0,1083.8" stroke="#0080ff" stroke-width="9.0"/>
<polyline points="575.6,1042.5 579.4,1055.0 590.0,1060.6 600.0,1075.0 605.0,1083.8" stroke="#0080ff" stroke-width="9.0"/>
<polyline points="243.8,1093.8 255.0,1100.0 270.0,1104.4 282.5,1105.6 292.5,1102.5 302.5,1095.0 326.2,1091.9 356.2,1093.8" stroke="#0080ff" stroke-width="13.9"/>
<polyline points="262.5,1105.0 266.2,1113.8 295.0,1118.8 311.2,1116.9 357.5,1118.1" stroke="#0080ff" stroke-width="11.6"/>
<polyline points="357.5,1118.1 360.0,1137.5 345.0,1160.0" stroke="#0080ff" stroke-width="13.9"/>
<polyline points="231.2,1118.8 239.4,1118.8 240.6,1131.2 233.8,1141.2" stroke="#0080ff" stroke-width="13.9"/>
<polyline points="261.2,1107.5 256.2,1123.8 250.0,1142.5 240.0,1162.5 228.8,1177.5" stroke="#0080ff" stroke-width="15.0"/>
<polyline points="228.8,1177.5 211.2,1171.2 201.2,1165.0 183.8,1168.1" stroke="#0080ff" stroke-width="12.7"/>
<polyline points="201.2,1163.8 213.8,1152.5 221.9,1147.5" stroke="#0080ff" stroke-width="8.1"/>
<polyline points="295.0,1127.5 288.8,1145.0 276.2,1167.5 257.5,1183.8 247.5,1191.2" stroke="#0080ff" stroke-width="15.0"/>
<polyline points="315.0,1121.2 312.5,1146.2 301.2,1177.5 285.0,1200.0 273.8,1215.0" stroke="#0080ff" stroke-width="11.6"/>
<polyline points="256.2,1202.5 270.0,1216.2" stroke="#0080ff" stroke-width="9.2"/>
<polyline points="360.0,1137.5 347.5,1161.2 323.8,1188.8 302.5,1215.0 285.0,1236.2" stroke="#0080ff" stroke-width="12.7"/>
<polyline points="383.8,1118.8 377.5,1150.0 362.5,1180.0 338.8,1208.8 320.0,1206.2" stroke="#0080ff" stroke-width="12.7"/>
<polyline points="385.0,1115.0 421.2,1116.2" stroke="#0080ff" stroke-width="11.6"/>
<polyline points="421.2,1121.2 401.2,1146.2 393.8,1167.5 402.5,1171.2" stroke="#0080ff" stroke-width="15.0"/>
<polyline points="312.5,1208.8 313.8,1236.2" stroke="#0080ff" stroke-width="9.2"/>
<polyline points="313.8,1235.6 345.0,1233.8 367.5,1225.0 375.0,1205.0 385.0,1188.8 405.0,1196.2 425.0,1195.0 427.5,1182.5" stroke="#0080ff" stroke-width="12.7"/>
<polyline points="236.2,1208.8 232.5,1220.0 247.5,1226.2 258.8,1232.5" stroke="#0080ff" stroke-width="10.4"/>
<polyline points="181.2,1182.5 192.5,1193.8 216.2,1205.0" stroke="#0080ff" stroke-width="8.1"/>
<polyline points="400.0,1086.2 418.8,1095.0 437.5,1100.6 456.2,1095.0 477.5,1086.9 497.5,1080.0 512.5,1070.0 525.0,1061.2 537.5,1053.8" stroke="#0080ff" stroke-width="10.6"/>
<polyline points="537.5,1053.8 542.5,1043.8 552.5,1036.2 568.8,1031.9" stroke="#0080ff" stroke-width="8.8"/>
<polyline points="543.8,1046.2 551.2,1065.0 556.2,1086.2 553.1,1110.0 545.6,1132.5 543.8,1150.0 548.1,1168.8" stroke="#0080ff" stroke-width="9.4"/>
<polyline points="516.2,1067.5 526.2,1088.8 530.6,1110.0 527.5,1136.2 523.1,1156.2 510.0,1162.5" stroke="#0080ff" stroke-width="10.0"/>
<polyline points="508.8,1107.5 523.8,1106.2" stroke="#0080ff" stroke-width="5.0"/>
<polyline points="576.9,1045.0 579.4,1061.2 590.0,1067.5 600.0,1078.8" stroke="#0080ff" stroke-width="7.5"/>
<polyline points="600.0,1080.0 585.0,1086.9 577.5,1095.0 576.2,1130.0 567.5,1143.8 552.5,1146.9" stroke="#0080ff" stroke-width="8.8"/>
<polyline points="420.0,1156.2 422.5,1143.1 437.5,1136.2 468.8,1141.0 506.2,1134.8 525.0,1129.4" stroke="#0080ff" stroke-width="8.1"/>
<polyline points="512.5,1210.0 525.0,1203.1 550.0,1195.6 570.0,1194.4" stroke="#0080ff" stroke-width="8.8"/>
<polyline points="400.0,1173.8 416.2,1176.2 425.0,1191.2 421.2,1200.0 400.0,1203.1" stroke="#0080ff" stroke-width="6.2"/>
</g>
<polygon points="593.8,1211.9 627.5,1201.2 626.2,1203.8 598.8,1220.0" fill="#50ffa8"/>
<polygon points="570.0,1202.5 578.8,1201.2 592.5,1225.0 581.2,1231.2 571.2,1220.0" fill="#50ffa8"/>
<g style="stroke:none">
<polygon class="ns" points="593.8,1211.9 627.5,1201.2 626.2,1203.8 598.8,1220.0" fill="#50ffa8"/>
<polygon class="ns" points="570.0,1202.5 578.8,1201.2 592.5,1225.0 581.2,1231.2 571.2,1220.0" fill="#50ffa8"/>
</g>
<polygon points="785.3,1100.0 818.4,1100.0 828.4,1113.1 810.6,1118.7 807.9,1113.9 802.7,1115.2 805.3,1121.8 796.6,1117.4" fill="#ff0a82"/>
<polygon points="822.3,1164.9 824.1,1164.0 836.7,1182.8 834.1,1187.1 821.0,1169.7" fill="#d2ffff"/>
<polygon points="902.9,1114.4 914.2,1106.1 918.1,1108.7 914.2,1119.2 908.1,1124.0" fill="#ff0a82"/>
<polygon points="879.4,1135.7 895.1,1126.1 900.3,1123.5 909.0,1136.1 893.3,1154.9" fill="#ff0a82"/>
<g style="stroke:none">
<polygon class="ns" points="902.9,1114.4 914.2,1106.1 918.1,1108.7 914.2,1119.2 908.1,1124.0" fill="#ff0a82"/>
<polygon class="ns" points="879.4,1135.7 895.1,1126.1 900.3,1123.5 909.0,1136.1 893.3,1154.9" fill="#ff0a82"/>
</g>
<polygon points="870.7,1185.8 873.3,1184.9 882.9,1194.1 881.1,1196.7 875.9,1193.2" fill="#50ffa8"/>
<polygon points="881.6,1203.7 884.6,1199.3 888.1,1203.7 887.2,1208.9 883.7,1209.3" fill="#50ffa8"/>
<polygon points="912.0,1227.2 917.7,1223.7 923.8,1228.0 917.7,1230.7" fill="#50ffa8"/>
<g style="stroke:none">
<polygon class="ns" points="870.7,1185.8 873.3,1184.9 882.9,1194.1 881.1,1196.7 875.9,1193.2" fill="#50ffa8"/>
<polygon class="ns" points="881.6,1203.7 884.6,1199.3 888.1,1203.7 887.2,1208.9 883.7,1209.3" fill="#50ffa8"/>
<polygon class="ns" points="912.0,1227.2 917.7,1223.7 923.8,1228.0 917.7,1230.7" fill="#50ffa8"/>
</g>
<polygon points="864.6,1212.4 868.0,1210.2 874.1,1213.2 879.4,1222.0 888.1,1228.0 913.3,1233.3 924.7,1234.6 925.1,1237.2 880.2,1233.3 868.9,1223.7 868.0,1217.6" fill="#d2ffff"/>
<polygon points="879.5,1262.5 882.0,1255.0 892.0,1252.5 897.0,1253.8 903.2,1250.0 915.8,1253.8 912.0,1267.5 902.0,1278.8 892.0,1281.9 877.6,1282.5" fill="#50ffa8"/>
<polygon points="927.0,1268.1 934.5,1272.5 938.9,1285.6 920.1,1287.5" fill="#ff0a82"/>
<polygon points="822.6,1251.9 835.1,1250.6 853.2,1256.2 853.2,1262.5 863.2,1272.5 865.8,1267.5 875.8,1269.4 874.5,1285.0 818.2,1280.0" fill="#ffff80"/>
<polygon points="767.0,1255.0 818.2,1256.2 815.8,1280.6 767.0,1278.8" fill="#ffff80"/>
<polygon points="791.4,1207.5 818.2,1210.0 812.0,1247.5 767.0,1246.9 767.0,1226.2 782.0,1226.2 782.0,1222.5 790.8,1222.5" fill="#ffff80"/>
<polygon points="767.0,1295.0 878.9,1295.0 880.8,1297.5 880.1,1317.5 859.5,1318.1 859.5,1321.2 767.0,1325.0" fill="#ffff80"/>
<polygon points="880.1,1295.0 904.5,1293.8 957.0,1296.2 958.2,1305.0 938.2,1315.0 923.2,1310.0 908.2,1305.0 884.5,1316.2" fill="#ffff80"/>
<polygon points="969.5,1245.6 982.0,1250.0 979.5,1270.0 983.2,1296.2 979.5,1308.8 962.0,1308.8 960.1,1267.5" fill="#ffff80"/>
<polygon points="945.8,1266.2 954.5,1265.6 952.0,1283.8 938.9,1285.6 938.2,1280.0" fill="#ffff80"/>
<g style="stroke:none">
<polygon class="ns" points="822.6,1251.9 835.1,1250.6 853.2,1256.2 853.2,1262.5 863.2,1272.5 865.8,1267.5 875.8,1269.4 874.5,1285.0 818.2,1280.0" fill="#ffff80"/>
<polygon class="ns" points="767.0,1255.0 818.2,1256.2 815.8,1280.6 767.0,1278.8" fill="#ffff80"/>
<polygon class="ns" points="791.4,1207.5 818.2,1210.0 812.0,1247.5 767.0,1246.9 767.0,1226.2 782.0,1226.2 782.0,1222.5 790.8,1222.5" fill="#ffff80"/>
<polygon class="ns" points="767.0,1295.0 878.9,1295.0 880.8,1297.5 880.1,1317.5 859.5,1318.1 859.5,1321.2 767.0,1325.0" fill="#ffff80"/>
<polygon class="ns" points="880.1,1295.0 904.5,1293.8 957.0,1296.2 958.2,1305.0 938.2,1315.0 923.2,1310.0 908.2,1305.0 884.5,1316.2" fill="#ffff80"/>
<polygon class="ns" points="969.5,1245.6 982.0,1250.0 979.5,1270.0 983.2,1296.2 979.5,1308.8 962.0,1308.8 960.1,1267.5" fill="#ffff80"/>
<polygon class="ns" points="945.8,1266.2 954.5,1265.6 952.0,1283.8 938.9,1285.6 938.2,1280.0" fill="#ffff80"/>
</g>
<polygon points="870.0,1225.0 907.5,1238.8 906.2,1247.5 881.2,1246.0 875.0,1250.0 867.5,1250.0 863.1,1246.2 865.0,1237.5" fill="#50ffa8"/>
<polygon points="865.0,1211.2 868.8,1210.0 873.8,1215.0 877.5,1222.5 890.0,1227.5 925.0,1232.5 926.2,1234.4 907.5,1238.8 870.0,1225.0" fill="#d2ffff"/>
<polygon points="348.4,1255.8 363.2,1248.8 359.7,1264.5 363.2,1274.9 356.2,1294.1 347.5,1295.9" fill="#00d200"/>
<polygon points="346.9,1317.5 378.8,1318.1 417.5,1301.9 424.4,1316.2 403.1,1326.9 400.0,1345.6 403.8,1345.0 404.0,1337.5 413.1,1334.4 414.4,1343.1 426.2,1339.8 427.2,1359.4 406.2,1359.4 372.5,1348.1 356.2,1346.5 346.9,1334.0" fill="#ffff80"/>
<polygon points="419.4,1300.6 478.8,1271.0 481.2,1275.0 496.2,1270.6 500.6,1284.4 425.6,1316.2" fill="#ffff80"/>
<polygon points="428.1,1324.4 487.5,1296.9 491.2,1305.0 494.4,1303.8 496.2,1314.4 513.8,1308.1 523.1,1322.5 476.2,1346.9 445.0,1357.5 430.0,1358.8" fill="#ffff80"/>
<polygon points="503.1,1279.4 512.5,1278.1 528.8,1283.1 572.5,1272.5 578.8,1277.5 581.2,1292.5 523.8,1321.2" fill="#ffff80"/>
<polygon points="346.9,1353.8 355.6,1346.2 377.5,1360.0 366.2,1385.6 344.4,1380.6" fill="#ffff80"/>
<polygon points="378.1,1360.6 407.5,1368.8 426.2,1371.9 445.0,1370.0 476.2,1360.0 526.2,1335.0 545.0,1371.2 537.5,1375.0 532.5,1383.8 533.1,1386.2 548.8,1381.2 555.0,1407.5 551.2,1408.8 520.0,1408.1 516.2,1396.2 482.5,1397.5 441.2,1405.0 440.0,1398.8 426.2,1400.6 426.9,1404.4 382.5,1395.0 368.8,1386.2" fill="#ffff80"/>
<polygon points="530.0,1333.8 586.2,1305.6 590.0,1355.6 546.2,1371.2" fill="#ffff80"/>
<polygon points="330.6,1335.0 343.1,1338.8 340.6,1382.5 328.8,1383.1" fill="#ffff80"/>
<polygon points="328.8,1388.8 340.0,1386.9 341.2,1407.5 331.2,1407.5" fill="#ffff80"/>
<polygon points="343.8,1386.2 378.8,1395.0 357.5,1432.9 341.2,1432.9" fill="#ffff80"/>
<polygon points="382.5,1396.9 440.0,1411.2 482.5,1407.5 486.0,1450.0 425.0,1436.2 412.5,1427.5 380.0,1421.2 381.2,1416.2 377.5,1415.0" fill="#ffff80"/>
<polygon points="489.0,1410.4 525.6,1412.0 527.0,1450.0 490.5,1450.0" fill="#ffff80"/>
<polygon points="534.8,1410.4 556.0,1408.8 563.8,1453.0 533.2,1451.5" fill="#ffff80"/>
<polygon points="583.8,1237.5 588.8,1235.0 607.0,1255.0 611.2,1280.0 596.2,1285.0 581.2,1277.5 580.6,1248.8" fill="#ffff80"/>
<polygon points="601.2,1296.9 610.0,1289.4 685.0,1290.6 847.0,1296.9 847.0,1320.0 812.5,1321.2 812.5,1323.8 733.8,1325.0 733.1,1320.6 715.0,1320.6 714.4,1323.8 707.5,1322.5 666.2,1320.0 635.0,1313.8 613.8,1305.0" fill="#ffff80"/>
<polygon points="592.5,1309.4 600.0,1311.2 608.8,1322.5 638.8,1363.1 643.1,1360.6 655.0,1356.2 670.0,1375.6 670.6,1380.0 686.9,1374.4 691.9,1382.5 685.0,1386.2 684.4,1405.0 692.5,1406.2 693.1,1419.4 655.0,1413.8 647.5,1410.0 622.5,1382.5 600.0,1357.5 593.8,1340.0" fill="#ffff80"/>
<polygon points="522.5,1383.1 560.0,1368.8 590.0,1357.5 601.2,1370.0 620.0,1390.0 640.0,1415.0 641.2,1419.4 638.8,1421.9 647.5,1437.5 656.2,1444.4 651.2,1460.0 612.5,1456.2 611.2,1453.8 588.8,1451.9 560.0,1396.2 547.5,1370.0" fill="#ffff80"/>
<polygon points="651.2,1421.9 676.2,1421.9 662.5,1443.8" fill="#ffff80"/>
<polygon points="685.6,1425.0 697.5,1428.1 706.9,1433.8 711.9,1452.5 692.5,1462.5 674.4,1443.8" fill="#ffff80"/>
<polygon points="543.8,1295.0 560.0,1286.2 580.0,1275.0 581.9,1292.5 560.0,1303.8 547.5,1310.0" fill="#ffff80"/>
<polygon points="543.8,1326.2 560.0,1317.5 585.6,1305.6 586.9,1311.2 586.2,1320.0 590.0,1355.0 560.0,1366.2 547.5,1370.0" fill="#ffff80"/>
<polygon points="581.2,1270.0 613.8,1270.0 612.5,1275.0 596.2,1285.0 587.5,1281.2" fill="#ffff80"/>
<polygon points="620.0,1265.0 703.1,1265.0 703.1,1276.2 620.0,1275.6" fill="#ffff80"/>
<polygon points="715.0,1265.0 816.2,1265.0 815.0,1280.6 735.0,1278.1 715.0,1276.9" fill="#ffff80"/>
<polygon points="819.4,1265.0 847.0,1265.0 847.0,1281.9 818.1,1280.6" fill="#ffff80"/>
<g style="stroke:none">
<polygon class="ns" points="346.9,1317.5 378.8,1318.1 417.5,1301.9 424.4,1316.2 403.1,1326.9 400.0,1345.6 403.8,1345.0 404.0,1337.5 413.1,1334.4 414.4,1343.1 426.2,1339.8 427.2,1359.4 406.2,1359.4 372.5,1348.1 356.2,1346.5 346.9,1334.0" fill="#ffff80"/>
<polygon class="ns" points="419.4,1300.6 478.8,1271.0 481.2,1275.0 496.2,1270.6 500.6,1284.4 425.6,1316.2" fill="#ffff80"/>
<polygon class="ns" points="428.1,1324.4 487.5,1296.9 491.2,1305.0 494.4,1303.8 496.2,1314.4 513.8,1308.1 523.1,1322.5 476.2,1346.9 445.0,1357.5 430.0,1358.8" fill="#ffff80"/>
<polygon class="ns" points="503.1,1279.4 512.5,1278.1 528.8,1283.1 572.5,1272.5 578.8,1277.5 581.2,1292.5 523.8,1321.2" fill="#ffff80"/>
<polygon class="ns" points="346.9,1353.8 355.6,1346.2 377.5,1360.0 366.2,1385.6 344.4,1380.6" fill="#ffff80"/>
<polygon class="ns" points="378.1,1360.6 407.5,1368.8 426.2,1371.9 445.0,1370.0 476.2,1360.0 526.2,1335.0 545.0,1371.2 537.5,1375.0 532.5,1383.8 533.1,1386.2 548.8,1381.2 555.0,1407.5 551.2,1408.8 520.0,1408.1 516.2,1396.2 482.5,1397.5 441.2,1405.0 440.0,1398.8 426.2,1400.6 426.9,1404.4 382.5,1395.0 368.8,1386.2" fill="#ffff80"/>
<polygon class="ns" points="530.0,1333.8 586.2,1305.6 590.0,1355.6 546.2,1371.2" fill="#ffff80"/>
<polygon class="ns" points="330.6,1335.0 343.1,1338.8 340.6,1382.5 328.8,1383.1" fill="#ffff80"/>
<polygon class="ns" points="328.8,1388.8 340.0,1386.9 341.2,1407.5 331.2,1407.5" fill="#ffff80"/>
<polygon class="ns" points="343.8,1386.2 378.8,1395.0 357.5,1432.9 341.2,1432.9" fill="#ffff80"/>
<polygon class="ns" points="382.5,1396.9 440.0,1411.2 482.5,1407.5 486.0,1450.0 425.0,1436.2 412.5,1427.5 380.0,1421.2 381.2,1416.2 377.5,1415.0" fill="#ffff80"/>
<polygon class="ns" points="489.0,1410.4 525.6,1412.0 527.0,1450.0 490.5,1450.0" fill="#ffff80"/>
<polygon class="ns" points="534.8,1410.4 556.0,1408.8 563.8,1453.0 533.2,1451.5" fill="#ffff80"/>
<polygon class="ns" points="583.8,1237.5 588.8,1235.0 607.0,1255.0 611.2,1280.0 596.2,1285.0 581.2,1277.5 580.6,1248.8" fill="#ffff80"/>
<polygon class="ns" points="601.2,1296.9 610.0,1289.4 685.0,1290.6 847.0,1296.9 847.0,1320.0 812.5,1321.2 812.5,1323.8 733.8,1325.0 733.1,1320.6 715.0,1320.6 714.4,1323.8 707.5,1322.5 666.2,1320.0 635.0,1313.8 613.8,1305.0" fill="#ffff80"/>
<polygon class="ns" points="592.5,1309.4 600.0,1311.2 608.8,1322.5 638.8,1363.1 643.1,1360.6 655.0,1356.2 670.0,1375.6 670.6,1380.0 686.9,1374.4 691.9,1382.5 685.0,1386.2 684.4,1405.0 692.5,1406.2 693.1,1419.4 655.0,1413.8 647.5,1410.0 622.5,1382.5 600.0,1357.5 593.8,1340.0" fill="#ffff80"/>
<polygon class="ns" points="522.5,1383.1 560.0,1368.8 590.0,1357.5 601.2,1370.0 620.0,1390.0 640.0,1415.0 641.2,1419.4 638.8,1421.9 647.5,1437.5 656.2,1444.4 651.2,1460.0 612.5,1456.2 611.2,1453.8 588.8,1451.9 560.0,1396.2 547.5,1370.0" fill="#ffff80"/>
<polygon class="ns" points="651.2,1421.9 676.2,1421.9 662.5,1443.8" fill="#ffff80"/>
<polygon class="ns" points="685.6,1425.0 697.5,1428.1 706.9,1433.8 711.9,1452.5 692.5,1462.5 674.4,1443.8" fill="#ffff80"/>
<polygon class="ns" points="543.8,1295.0 560.0,1286.2 580.0,1275.0 581.9,1292.5 560.0,1303.8 547.5,1310.0" fill="#ffff80"/>
<polygon class="ns" points="543.8,1326.2 560.0,1317.5 585.6,1305.6 586.9,1311.2 586.2,1320.0 590.0,1355.0 560.0,1366.2 547.5,1370.0" fill="#ffff80"/>
<polygon class="ns" points="581.2,1270.0 613.8,1270.0 612.5,1275.0 596.2,1285.0 587.5,1281.2" fill="#ffff80"/>
<polygon class="ns" points="620.0,1265.0 703.1,1265.0 703.1,1276.2 620.0,1275.6" fill="#ffff80"/>
<polygon class="ns" points="715.0,1265.0 816.2,1265.0 815.0,1280.6 735.0,1278.1 715.0,1276.9" fill="#ffff80"/>
<polygon class="ns" points="819.4,1265.0 847.0,1265.0 847.0,1281.9 818.1,1280.6" fill="#ffff80"/>
</g>
<polygon points="592.5,1303.1 600.0,1296.9 613.8,1305.0 635.0,1313.8 666.2,1320.0 706.9,1322.5 700.0,1365.0 670.0,1375.6 655.0,1356.2 643.1,1360.6 638.8,1363.1 608.8,1322.5 600.0,1311.2 592.5,1309.4" fill="#50ffa8"/>
<polygon points="802.7,1115.2 807.9,1113.9 810.6,1118.7 805.3,1121.8" fill="#c896ff"/>
<polygon points="906.4,1255.6 914.5,1257.5 912.0,1266.2 904.5,1263.8" fill="#800000"/>
<polygon class="ns" points="932.5,1131.2 945.0,1131.2 946.9,1162.5 938.8,1220.0 933.8,1232.5 926.2,1267.5 920.6,1287.5 913.8,1287.5 913.8,1277.5 917.5,1262.5 926.2,1234.4 927.5,1218.8 936.2,1175.0 934.4,1162.5" fill="#d2ffff"/>
<polygon points="490.6,1299.4 500.6,1295.0 503.8,1301.9 493.8,1306.2" fill="#eba55b"/>
<polygon points="493.8,1306.2 496.9,1305.6 497.5,1308.8 494.4,1309.4" fill="#c896ff"/>
<polygon points="414.4,1331.9 423.1,1328.1 425.6,1334.4 415.6,1338.1" fill="#eba55b"/>
<polygon points="408.8,1330.6 412.5,1330.0 412.8,1332.8 409.0,1333.1" fill="#c896ff"/>
<polygon points="508.1,1272.5 513.1,1269.4 516.2,1274.4 510.6,1276.9" fill="#800000"/>
<polygon points="679.4,1327.5 688.8,1328.1 688.1,1333.1 679.4,1332.5" fill="#6464ff"/>
<polygon points="614.0,1242.7 656.7,1227.4 696.3,1224.4 707.0,1223.8 708.5,1247.3 659.8,1246.3 630.8,1251.2" fill="#ffff80"/>
<polygon points="725.3,1218.3 783.2,1222.9 784.8,1229.0 790.9,1227.4 792.4,1209.1 818.3,1210.7 813.7,1247.3 725.3,1246.3" fill="#ffff80"/>
<polygon points="714.6,1254.9 815.2,1254.3 815.2,1280.8 714.6,1276.2" fill="#ffff80"/>
<polygon points="621.6,1268.6 635.4,1257.9 665.9,1254.9 696.3,1254.3 704.0,1261.0 704.0,1276.2 620.1,1276.2" fill="#ffff80"/>
<polygon points="585.1,1236.6 598.8,1235.1 607.9,1245.7 617.1,1261.0 615.5,1271.6 597.3,1283.8 582.0,1274.7 579.9,1254.9" fill="#ffff80"/>
<g style="stroke:none">
<polygon class="ns" points="614.0,1242.7 656.7,1227.4 696.3,1224.4 707.0,1223.8 708.5,1247.3 659.8,1246.3 630.8,1251.2" fill="#ffff80"/>
<polygon class="ns" points="725.3,1218.3 783.2,1222.9 784.8,1229.0 790.9,1227.4 792.4,1209.1 818.3,1210.7 813.7,1247.3 725.3,1246.3" fill="#ffff80"/>
<polygon class="ns" points="714.6,1254.9 815.2,1254.3 815.2,1280.8 714.6,1276.2" fill="#ffff80"/>
<polygon class="ns" points="621.6,1268.6 635.4,1257.9 665.9,1254.9 696.3,1254.3 704.0,1261.0 704.0,1276.2 620.1,1276.2" fill="#ffff80"/>
<polygon class="ns" points="585.1,1236.6 598.8,1235.1 607.9,1245.7 617.1,1261.0 615.5,1271.6 597.3,1283.8 582.0,1274.7 579.9,1254.9" fill="#ffff80"/>
</g>
<polygon points="573.5,1450.0 575.9,1448.5 577.4,1450.6 575.0,1452.4" fill="#80ff00"/>
<polygon points="755.8,1254.3 812.2,1253.4 810.7,1270.1 801.5,1270.7 800.0,1265.5 766.5,1266.5 764.9,1269.5 755.8,1268.6" fill="#eba55b"/>
<polygon points="716.2,1254.9 726.8,1254.9 726.8,1260.4 716.2,1260.4" fill="#eba55b"/>
<g style="stroke:none">
<polygon class="ns" points="755.8,1254.3 812.2,1253.4 810.7,1270.1 801.5,1270.7 800.0,1265.5 766.5,1266.5 764.9,1269.5 755.8,1268.6" fill="#eba55b"/>
<polygon class="ns" points="716.2,1254.9 726.8,1254.9 726.8,1260.4 716.2,1260.4" fill="#eba55b"/>
</g>
<polygon points="732.9,1252.4 751.2,1251.8 751.8,1264.0 733.5,1264.6" fill="#ff0a82"/>
</g>
<polygon class="bd" points="922.5,302.0 991.2,315.8 1037.5,331.2 1125.0,358.8 1122.5,380.0 1107.0,453.8 1130.0,452.5 1374.0,440.0 1496.2,434.4 1511.8,433.6 1528.4,436.2 1531.0,446.6 1538.9,471.0 1563.2,509.3 1535.4,549.4 1525.8,564.2 1496.2,579.0 1454.4,587.7 1357.7,557.2 1260.1,545.1 1218.3,559.0 1190.0,611.2 1172.5,637.5 1150.0,668.8 1122.5,695.0 1100.0,712.5 1102.5,726.2 1112.5,765.0 1110.0,815.0 1131.2,900.0 1107.5,965.0 1098.8,992.5 1105.0,1045.0 1103.4,1026.4 1107.4,1053.9 1103.4,1063.0 1060.7,1115.9 1030.1,1160.7 1009.8,1195.2 987.4,1231.8 986.4,1294.9 982.4,1307.1 981.3,1320.3 900.0,1325.4 874.0,1322.5 712.5,1327.5 702.5,1417.5 712.5,1452.5 692.5,1462.5 500.0,1458.8 425.0,1441.2 340.0,1432.5 330.0,1407.5 326.2,1385.0 330.0,1335.0 346.2,1338.8 348.8,1255.0 300.0,1250.0 266.2,1245.0 200.0,1221.2 146.2,1192.5 182.5,1166.2 230.0,1115.0 227.5,1111.2 108.8,1061.2 120.0,1017.5 57.5,970.0 67.5,915.0 251.2,986.2 266.2,925.0 202.5,907.5 215.0,841.2 346.2,873.8 333.8,937.5 271.2,925.0 256.2,1000.0 358.8,1033.8 367.5,1053.8 431.2,1048.8 433.8,1043.8 437.0,1043.8 437.5,1049.5 462.5,1043.8 500.0,1018.3 535.6,1001.0 527.5,983.7 554.9,969.4 563.0,942.0 539.7,931.8 551.9,909.5 650.5,832.2 645.4,812.9 748.1,747.8 766.4,708.1 789.4,622.9 787.5,615.0 784.4,596.2 783.5,586.2 792.5,561.9 832.5,443.5 892.5,432.5 900.0,420.0 910.0,395.0"/>
<g class="lb">
<text x="950.5" y="363.1" font-size="18.5" textLength="30.0" lengthAdjust="spacingAndGlyphs">Ж-1</text>
<text x="1013.2" y="371.7" font-size="18.5" textLength="23.3" lengthAdjust="spacingAndGlyphs">Р-2</text>
<text x="1071.5" y="413.9" font-size="18.5" textLength="22.2" lengthAdjust="spacingAndGlyphs">СЗ</text>
<text x="951.6" y="421.4" font-size="18.5" textLength="23.3" lengthAdjust="spacingAndGlyphs">Р-2</text>
<text x="869.5" y="449.5" font-size="9.5" textLength="15.4" lengthAdjust="spacingAndGlyphs">Ж-1</text>
<text x="944.0" y="450.6" font-size="12.5" textLength="20.2" lengthAdjust="spacingAndGlyphs">Ж-1</text>
<text x="870.6" y="490.2" font-size="14.5" textLength="23.5" lengthAdjust="spacingAndGlyphs">Ж-1</text>
<text x="938.6" y="483.7" font-size="14.5" textLength="23.5" lengthAdjust="spacingAndGlyphs">Ж-1</text>
<text x="1112.6" y="476.5" font-size="12.5" textLength="15.8" lengthAdjust="spacingAndGlyphs">Р-2</text>
<text x="1152.5" y="499.2" font-size="12.5" textLength="38.8" lengthAdjust="spacingAndGlyphs">ОД(С-1)</text>
<text x="1281.1" y="514.3" font-size="18.5" textLength="30.0" lengthAdjust="spacingAndGlyphs">Ж-2</text>
<text x="1398.8" y="535.9" font-size="18.5" textLength="25.9" lengthAdjust="spacingAndGlyphs">П-6</text>
<text x="1510.0" y="524.1" font-size="18.5" textLength="23.3" lengthAdjust="spacingAndGlyphs">Р-2</text>
<text x="994.8" y="510.0" font-size="9.5" textLength="12.0" lengthAdjust="spacingAndGlyphs">Р-2</text>
<text x="1216.2" y="531.6" font-size="9.5" textLength="13.3" lengthAdjust="spacingAndGlyphs">И-3</text>
<text x="1157.9" y="561.5" font-size="14.5" textLength="45.0" lengthAdjust="spacingAndGlyphs">ОД(С-1)</text>
<text x="880.3" y="562.9" font-size="9.5" textLength="12.0" lengthAdjust="spacingAndGlyphs">Р-2</text>
<text x="823.1" y="593.2" font-size="9.5" textLength="12.0" lengthAdjust="spacingAndGlyphs">Р-2</text>
<text x="941.9" y="570.5" font-size="12.5" textLength="20.2" lengthAdjust="spacingAndGlyphs">Ж-1</text>
<text x="982.9" y="570.5" font-size="12.5" textLength="20.2" lengthAdjust="spacingAndGlyphs">Ж-1</text>
<text x="1028.3" y="576.6" font-size="14.5" textLength="23.5" lengthAdjust="spacingAndGlyphs">Ж-1</text>
<text x="805.8" y="625.2" font-size="14.5" textLength="23.5" lengthAdjust="spacingAndGlyphs">Ж-1</text>
<text x="857.6" y="611.2" font-size="14.5" textLength="23.5" lengthAdjust="spacingAndGlyphs">Ж-1</text>
<text x="923.5" y="639.3" font-size="14.5" textLength="23.5" lengthAdjust="spacingAndGlyphs">Ж-1</text>
<text x="962.4" y="661.2" font-size="12.5" textLength="20.2" lengthAdjust="spacingAndGlyphs">Ж-1</text>
<text x="1125.5" y="617.7" font-size="14.5" textLength="23.5" lengthAdjust="spacingAndGlyphs">Ж-1</text>
<text x="1008.9" y="676.4" font-size="18.5" textLength="30.0" lengthAdjust="spacingAndGlyphs">Ж-1</text>
<text x="1063.9" y="670.6" font-size="14.5" textLength="23.5" lengthAdjust="spacingAndGlyphs">Ж-1</text>
<text x="816.6" y="735.4" font-size="14.5" textLength="23.5" lengthAdjust="spacingAndGlyphs">Ж-1</text>
<text x="852.2" y="765.6" font-size="14.5" textLength="23.5" lengthAdjust="spacingAndGlyphs">Ж-1</text>
<text x="752.9" y="764.9" font-size="9.5" textLength="15.4" lengthAdjust="spacingAndGlyphs">Ж-1</text>
<text x="935.4" y="767.1" font-size="12.5" textLength="20.2" lengthAdjust="spacingAndGlyphs">Ж-1</text>
<text x="972.1" y="784.4" font-size="12.5" textLength="20.2" lengthAdjust="spacingAndGlyphs">Ж-1</text>
<text x="1006.7" y="797.3" font-size="12.5" textLength="20.2" lengthAdjust="spacingAndGlyphs">Ж-1</text>
<text x="765.8" y="809.2" font-size="18.5" textLength="30.0" lengthAdjust="spacingAndGlyphs">Ж-1</text>
<text x="922.4" y="825.4" font-size="12.5" textLength="20.2" lengthAdjust="spacingAndGlyphs">Ж-1</text>
<text x="1058.5" y="825.4" font-size="18.5" textLength="30.0" lengthAdjust="spacingAndGlyphs">Ж-1</text>
<text x="1013.2" y="844.9" font-size="12.5" textLength="20.2" lengthAdjust="spacingAndGlyphs">Ж-1</text>
<text x="769.1" y="851.3" font-size="18.5" textLength="30.0" lengthAdjust="spacingAndGlyphs">Ж-1</text>
<text x="961.3" y="854.6" font-size="18.5" textLength="30.0" lengthAdjust="spacingAndGlyphs">Ж-1</text>
<text x="886.8" y="860.0" font-size="18.5" textLength="30.0" lengthAdjust="spacingAndGlyphs">Ж-1</text>
<text x="665.4" y="870.8" font-size="18.5" textLength="30.0" lengthAdjust="spacingAndGlyphs">Ж-1</text>
<text x="1105.0" y="877.3" font-size="9.5" textLength="12.0" lengthAdjust="spacingAndGlyphs">Р-2</text>
<text x="778.8" y="901.0" font-size="18.5" textLength="30.0" lengthAdjust="spacingAndGlyphs">Ж-1</text>
<text x="936.5" y="902.1" font-size="12.5" textLength="20.2" lengthAdjust="spacingAndGlyphs">Ж-1</text>
<text x="634.0" y="917.2" font-size="18.5" textLength="30.0" lengthAdjust="spacingAndGlyphs">Ж-1</text>
<text x="981.9" y="933.4" font-size="18.5" textLength="30.0" lengthAdjust="spacingAndGlyphs">Ж-1</text>
<text x="896.5" y="937.7" font-size="18.5" textLength="30.0" lengthAdjust="spacingAndGlyphs">Ж-1</text>
<text x="796.1" y="970.2" font-size="18.5" textLength="30.0" lengthAdjust="spacingAndGlyphs">Ж-1</text>
<text x="1063.9" y="967.6" font-size="14.5" textLength="23.5" lengthAdjust="spacingAndGlyphs">Ж-1</text>
<text x="628.6" y="981.0" font-size="18.5" textLength="30.0" lengthAdjust="spacingAndGlyphs">Ж-1</text>
<text x="945.1" y="984.2" font-size="18.5" textLength="30.0" lengthAdjust="spacingAndGlyphs">Ж-1</text>
<text x="1020.7" y="981.7" font-size="14.5" textLength="23.5" lengthAdjust="spacingAndGlyphs">Ж-1</text>
<text x="682.7" y="995.0" font-size="18.5" textLength="30.0" lengthAdjust="spacingAndGlyphs">Ж-1</text>
<text x="571.4" y="992.8" font-size="12.5" textLength="20.2" lengthAdjust="spacingAndGlyphs">Ж-1</text>
<text x="752.9" y="1019.8" font-size="18.5" textLength="30.0" lengthAdjust="spacingAndGlyphs">Ж-1</text>
<text x="977.5" y="1023.1" font-size="18.5" textLength="30.0" lengthAdjust="spacingAndGlyphs">Ж-1</text>
<text x="859.8" y="1028.1" font-size="14.5" textLength="23.5" lengthAdjust="spacingAndGlyphs">Ж-1</text>
<text x="817.7" y="1043.2" font-size="14.5" textLength="23.5" lengthAdjust="spacingAndGlyphs">Ж-1</text>
<text x="999.1" y="1070.2" font-size="14.5" textLength="23.5" lengthAdjust="spacingAndGlyphs">Ж-1</text>
<text x="890.0" y="1073.5" font-size="14.5" textLength="23.5" lengthAdjust="spacingAndGlyphs">Ж-1</text>
<text x="839.3" y="1093.3" font-size="18.5" textLength="30.0" lengthAdjust="spacingAndGlyphs">Ж-1</text>
<text x="954.8" y="1108.4" font-size="18.5" textLength="30.0" lengthAdjust="spacingAndGlyphs">Ж-1</text>
<text x="1026.1" y="1107.0" font-size="14.5" textLength="23.5" lengthAdjust="spacingAndGlyphs">Ж-1</text>
<text x="868.4" y="1130.0" font-size="12.5" textLength="20.2" lengthAdjust="spacingAndGlyphs">Ж-1</text>
<text x="993.7" y="1136.5" font-size="12.5" textLength="20.2" lengthAdjust="spacingAndGlyphs">Ж-1</text>
<text x="224.7" y="858.9" font-size="9.5" textLength="15.4" lengthAdjust="spacingAndGlyphs">Ж-1</text>
<text x="264.6" y="867.5" font-size="9.5" textLength="15.4" lengthAdjust="spacingAndGlyphs">Ж-1</text>
<text x="216.0" y="892.4" font-size="9.5" textLength="15.4" lengthAdjust="spacingAndGlyphs">Ж-1</text>
<text x="250.6" y="900.7" font-size="14.5" textLength="23.5" lengthAdjust="spacingAndGlyphs">Ж-1</text>
<text x="306.8" y="914.0" font-size="18.5" textLength="30.0" lengthAdjust="spacingAndGlyphs">Ж-1</text>
<text x="180.4" y="1032.8" font-size="18.5" textLength="60.1" lengthAdjust="spacingAndGlyphs">ОД(С-2)</text>
<text x="302.4" y="1062.0" font-size="18.5" textLength="60.1" lengthAdjust="spacingAndGlyphs">ОД(С-2)</text>
<text x="408.3" y="1072.4" font-size="14.5" textLength="28.3" lengthAdjust="spacingAndGlyphs">СХ-7</text>
<text x="269.0" y="1089.7" font-size="14.5" textLength="18.3" lengthAdjust="spacingAndGlyphs">Р-2</text>
<text x="320.8" y="1087.9" font-size="9.5" textLength="12.0" lengthAdjust="spacingAndGlyphs">Р-2</text>
<text x="513.1" y="1053.3" font-size="9.5" textLength="12.0" lengthAdjust="spacingAndGlyphs">Р-2</text>
<text x="483.9" y="1072.8" font-size="9.5" textLength="12.0" lengthAdjust="spacingAndGlyphs">Р-2</text>
<text x="572.5" y="1082.5" font-size="9.5" textLength="18.5" lengthAdjust="spacingAndGlyphs">СХ-7</text>
<text x="617.8" y="1085.7" font-size="9.5" textLength="12.0" lengthAdjust="spacingAndGlyphs">Р-2</text>
<text x="654.6" y="1094.4" font-size="18.5" textLength="23.3" lengthAdjust="spacingAndGlyphs">Р-2</text>
<text x="715.1" y="1089.7" font-size="14.5" textLength="18.3" lengthAdjust="spacingAndGlyphs">Р-4</text>
<text x="799.3" y="1104.1" font-size="9.5" textLength="22.3" lengthAdjust="spacingAndGlyphs">ОД(К)</text>
<text x="476.3" y="1122.5" font-size="18.5" textLength="36.1" lengthAdjust="spacingAndGlyphs">СХ-7</text>
<text x="745.3" y="1143.7" font-size="14.5" textLength="18.3" lengthAdjust="spacingAndGlyphs">Р-2</text>
<text x="701.0" y="1166.7" font-size="18.5" textLength="23.3" lengthAdjust="spacingAndGlyphs">Р-4</text>
<text x="840.4" y="1157.0" font-size="9.5" textLength="12.0" lengthAdjust="spacingAndGlyphs">Р-2</text>
<text x="860.9" y="1172.1" font-size="9.5" textLength="12.0" lengthAdjust="spacingAndGlyphs">Р-3</text>
<text x="972.1" y="1167.5" font-size="14.5" textLength="44.2" lengthAdjust="spacingAndGlyphs">ОД(С-7)</text>
<text x="624.3" y="1186.9" font-size="14.5" textLength="18.3" lengthAdjust="spacingAndGlyphs">Р-3</text>
<text x="720.5" y="1197.0" font-size="18.5" textLength="25.9" lengthAdjust="spacingAndGlyphs">П-5</text>
<text x="455.8" y="1203.5" font-size="18.5" textLength="36.1" lengthAdjust="spacingAndGlyphs">СХ-7</text>
<text x="169.6" y="1197.7" font-size="14.5" textLength="18.3" lengthAdjust="spacingAndGlyphs">Р-1</text>
<text x="845.8" y="1233.7" font-size="18.5" textLength="23.3" lengthAdjust="spacingAndGlyphs">Р-3</text>
<text x="712.9" y="1235.5" font-size="14.5" textLength="18.9" lengthAdjust="spacingAndGlyphs">Т-3</text>
<text x="752.9" y="1245.2" font-size="14.5" textLength="23.5" lengthAdjust="spacingAndGlyphs">Ж-1</text>
<text x="597.3" y="1269.0" font-size="14.5" textLength="23.5" lengthAdjust="spacingAndGlyphs">Ж-1</text>
<text x="683.7" y="1273.3" font-size="14.5" textLength="23.5" lengthAdjust="spacingAndGlyphs">Ж-1</text>
<text x="793.9" y="1278.0" font-size="9.5" textLength="15.4" lengthAdjust="spacingAndGlyphs">Ж-1</text>
<text x="836.0" y="1274.8" font-size="18.5" textLength="30.0" lengthAdjust="spacingAndGlyphs">Ж-1</text>
<text x="890.0" y="1276.6" font-size="14.5" textLength="18.3" lengthAdjust="spacingAndGlyphs">Р-2</text>
<text x="399.7" y="1280.2" font-size="18.5" textLength="23.3" lengthAdjust="spacingAndGlyphs">Р-3</text>
<text x="533.6" y="1303.6" font-size="14.5" textLength="23.5" lengthAdjust="spacingAndGlyphs">Ж-1</text>
<text x="893.3" y="1308.2" font-size="9.5" textLength="15.4" lengthAdjust="spacingAndGlyphs">Ж-1</text>
<text x="968.9" y="1285.6" font-size="9.5" textLength="15.4" lengthAdjust="spacingAndGlyphs">Ж-1</text>
<text x="747.5" y="1316.9" font-size="18.5" textLength="30.0" lengthAdjust="spacingAndGlyphs">Ж-1</text>
<text x="383.5" y="1338.1" font-size="14.5" textLength="23.5" lengthAdjust="spacingAndGlyphs">Ж-1</text>
<text x="461.2" y="1338.5" font-size="18.5" textLength="30.0" lengthAdjust="spacingAndGlyphs">Ж-1</text>
<text x="560.6" y="1350.4" font-size="18.5" textLength="30.0" lengthAdjust="spacingAndGlyphs">Ж-1</text>
<text x="652.4" y="1343.9" font-size="18.5" textLength="23.3" lengthAdjust="spacingAndGlyphs">Р-2</text>
<text x="357.5" y="1373.0" font-size="9.5" textLength="15.4" lengthAdjust="spacingAndGlyphs">Ж-1</text>
<text x="490.4" y="1390.3" font-size="18.5" textLength="30.0" lengthAdjust="spacingAndGlyphs">Ж-1</text>
<text x="664.3" y="1402.2" font-size="18.5" textLength="30.0" lengthAdjust="spacingAndGlyphs">Ж-1</text>
<text x="357.5" y="1411.6" font-size="14.5" textLength="23.5" lengthAdjust="spacingAndGlyphs">Ж-1</text>
<text x="461.2" y="1432.1" font-size="14.5" textLength="23.5" lengthAdjust="spacingAndGlyphs">Ж-1</text>
<text x="507.7" y="1436.8" font-size="12.5" textLength="20.2" lengthAdjust="spacingAndGlyphs">Ж-1</text>
<text x="547.6" y="1437.9" font-size="12.5" textLength="20.2" lengthAdjust="spacingAndGlyphs">Ж-1</text>
<text x="610.3" y="1434.6" font-size="18.5" textLength="30.0" lengthAdjust="spacingAndGlyphs">Ж-1</text>
<text x="693.5" y="1449.7" font-size="12.5" textLength="20.2" lengthAdjust="spacingAndGlyphs">Ж-1</text>
</g>
</svg>
<div class="lt" style="top:183.2px">Граница населенного пункта</div>
<div id="tz">Территориальные зоны</div>
<div class="sw" style="top:248.7px;background:#ffff80"></div><div class="lt" style="top:254.2px">Ж-1&nbsp; Зона застройки индивидуальными жилыми домами</div>
<div class="sw" style="top:283.1px;background:#eba55b"></div><div class="lt" style="top:288.6px">Ж-2&nbsp; Зона малоэтажных многоквартирных жилых домов</div>
<div class="sw" style="top:317.4px;background:#6464ff"></div><div class="lt" style="top:322.9px">ИК&nbsp; Зона объектов инженерной инфраструктуры комплексная</div>
<div class="sw" style="top:351.8px;background:#800000"></div><div class="lt" style="top:357.3px">И-2&nbsp; Зона водоотводящих объектов инженерной инфраструктуры</div>
<div class="sw" style="top:386.2px;background:#ff0000"></div><div class="lt" style="top:391.7px">И-3&nbsp; Зона электрообеспечивающих объектов инженерной инфраструктуры</div>
<div class="sw" style="top:420.5px;background:#80ff00"></div><div class="lt" style="top:426.0px">И-4&nbsp; Зона газообеспечивающих объектов инженерной инфраструктуры</div>
<div class="sw" style="top:454.9px;background:#c896ff"></div><div class="lt" style="top:460.4px">И-5&nbsp; Зона теплообеспечивающих объектов инженерной инфраструктуры</div>
<div class="sw" style="top:489.3px;background:#a0ffd2"></div><div class="lt" style="top:494.8px">Р-1&nbsp; Зона городских лесов, лесопарков, лугопарков</div>
<div class="sw" style="top:523.7px;background:#50ffa8"></div><div class="lt" style="top:529.2px">Р-2&nbsp; Зона городских парков, скверов, садов</div>
<div class="sw" style="top:558.0px;background:#0080ff"></div><div class="lt" style="top:563.5px">Р-3 Зона объектов, связанных с использованием водных ресурсов</div>
<div class="sw" style="top:592.4px;background:#00ab5a"></div><div class="lt" style="top:597.9px">Р-4&nbsp; Зона санаториев, баз отдыха, лагерей отдыха, пляжей</div>
<div class="sw" style="top:626.8px;background:#ff0a82"></div><div class="lt" style="top:632.3px">ОД(К)&nbsp; Общественно-деловая зона (комплексная)</div>
<div class="sw" style="top:661.1px;background:#dc8cd2"></div><div class="lt" style="top:666.6px">ОД(С-1)&nbsp; Зона торговых комплексов</div>
<div class="sw" style="top:695.5px;background:#ffd2d2"></div><div class="lt" style="top:701.0px">ОД(С-2)&nbsp; Зона лечебно-оздоровительных комплексов</div>
<div class="sw" style="top:729.9px;background:#0096d2"></div><div class="lt" style="top:735.4px">ОД(С-4)&nbsp; Зона культовых религиозных комплексов</div>
<div class="sw" style="top:764.2px;background:#b464ff"></div><div class="lt" style="top:769.8px">ОД(С-5)&nbsp; Зона спортивных комплексов</div>
<div class="sw" style="top:798.6px;background:#c39bb9"></div><div class="lt" style="top:804.1px">ОД(С-7)&nbsp; Зона школьных, дошкольных учебных комплексов</div>
<div class="sw" style="top:833.0px;background:#00d200"></div><div class="lt" style="top:838.5px">СХ-7&nbsp; Зона ведения садоводства, огородничества и дачного хозяйства</div>
<div class="sw" style="top:867.4px;background:#ffa0d2"></div><div class="lt" style="top:872.9px">Т-3&nbsp; Зона объектов автомобильного транспорта</div>
<div class="sw" style="top:901.7px;background:#d2ffff"></div><div class="lt" style="top:907.2px">ЗОП&nbsp; Зона общего пользования</div>
<div class="sw" style="top:936.1px;background:#be6400"></div><div class="lt" style="top:941.6px">СЗ&nbsp; Зона захоронений</div>
<div class="sw" style="top:970.5px;background:#c0c0c0"></div><div class="lt" style="top:976.0px">П-4&nbsp; Производственная зона IV класса опасности</div>
<div class="sw" style="top:1004.8px;background:#e0e0e0"></div><div class="lt" style="top:1010.3px">П-5&nbsp; Производственная зона V класса опасности</div>
<div class="sw" style="top:1039.2px;background:#ffffff"></div><div class="lt" style="top:1044.7px">П-6&nbsp; Производственная зона, не требующая организации санитарно-защитной зоны</div>
</body></html>
